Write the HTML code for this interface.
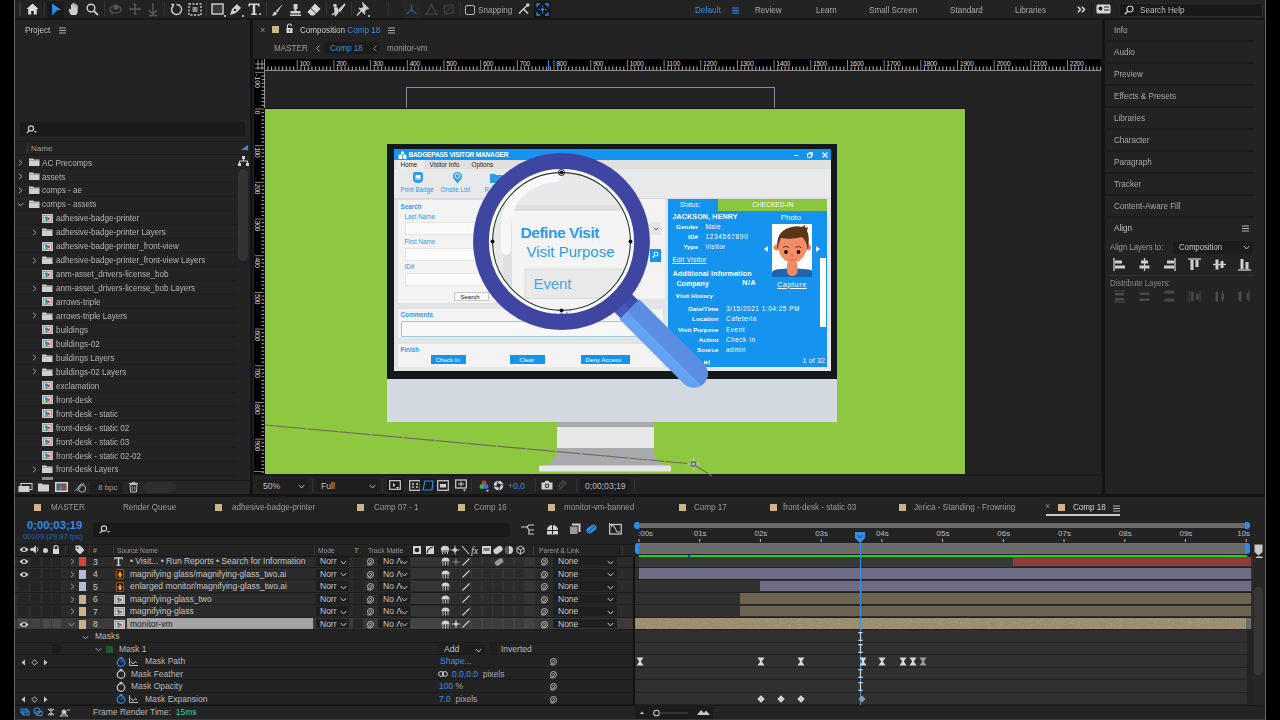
<!DOCTYPE html>
<html><head><meta charset="utf-8">
<style>
*{box-sizing:border-box;margin:0;padding:0}
html,body{width:1280px;height:720px;overflow:hidden;background:#000;font-family:"Liberation Sans",sans-serif;color:#a9a9a9;font-size:9px}
.a{position:absolute}
.t{position:absolute;white-space:nowrap;line-height:1}
.pan{position:absolute;background:#232323}
.ic{position:absolute;overflow:visible}
.sep{position:absolute;width:1px;background:#353535}
.n{transform:scaleX(.9);transform-origin:0 50%}
.n8{transform:scaleX(.86);transform-origin:0 50%}
</style></head>
<body>
<!-- frame -->
<div class="a" style="left:14px;top:0;width:1252px;height:720px;background:#141414;border-left:1px solid #686868;border-right:1px solid #686868"></div>
<!-- TOOLBAR -->
<div class="pan" style="left:15px;top:0;width:1250px;height:18px;background:#232323"></div>
<div class="a" style="left:15px;top:18px;width:1250px;height:2px;background:#171717"></div>
<div class="a" style="left:19px;top:2px;width:2px;height:14px;background:#3a3a3a"></div>
<svg class="ic" style="left:26px;top:3px" width="13" height="12" viewBox="0 0 13 12"><path d="M6.5 0.5 L12.5 6 L10.8 6 L10.8 11.5 L7.8 11.5 L7.8 8 L5.2 8 L5.2 11.5 L2.2 11.5 L2.2 6 L0.5 6 Z" fill="#dcdcdc"/></svg>
<div class="sep" style="left:44px;top:2px;height:14px"></div>
<div class="a" style="left:47px;top:1px;width:17px;height:17px;background:#1a1a1a;border-radius:2px"></div>
<svg class="ic" style="left:51px;top:3px" width="11" height="13" viewBox="0 0 11 13"><path d="M1 0.5 L10 6.8 L5.5 7.5 L1.2 12.5 Z" fill="#2b8cf2"/></svg>
<svg class="ic" style="left:68px;top:2px" width="12" height="14" viewBox="0 0 12 14"><path d="M3 13 C1 10 0.5 8 1 7 C1.5 6.5 2.5 7 3 8 L3 3 C3 2 4.3 2 4.3 3 L4.3 6 L4.5 1.5 C4.5 0.5 6 0.5 6 1.5 L6 6 L6.3 2 C6.3 1 7.8 1 7.8 2 L7.8 6.5 L8.3 3 C8.3 2.2 9.7 2.2 9.7 3 L9.7 9 C9.7 11 9 12 8 13 Z" fill="#d0d0d0"/></svg>
<svg class="ic" style="left:86px;top:3px" width="13" height="13" viewBox="0 0 13 13"><circle cx="5" cy="5" r="3.8" fill="none" stroke="#d0d0d0" stroke-width="1.4"/><path d="M7.8 7.8 L12 12" stroke="#d0d0d0" stroke-width="1.8"/></svg>
<div class="sep" style="left:104px;top:2px;height:14px"></div>
<svg class="ic" style="left:109px;top:3px" width="14" height="13" viewBox="0 0 14 13"><ellipse cx="6.5" cy="6.5" rx="5.5" ry="3.5" fill="none" stroke="#5a5a5a" stroke-width="1.2"/><circle cx="7" cy="4" r="2.6" fill="#5a5a5a"/><path d="M2 10 L4 10 L3 12Z" fill="#5a5a5a"/></svg>
<svg class="ic" style="left:129px;top:3px" width="13" height="13" viewBox="0 0 13 13"><path d="M6 1 V11 M1 6 H11" stroke="#5a5a5a" stroke-width="1.5"/><path d="M6 0 L4 2 H8Z M6 12 L4 10 H8Z M0 6 L2 4 V8Z M12 6 L10 4 V8Z" fill="#5a5a5a"/></svg>
<svg class="ic" style="left:148px;top:3px" width="11" height="13" viewBox="0 0 11 13"><path d="M5 0 V11 M1 7 L5 11 L9 7 M1 12.5 H9" stroke="#5a5a5a" stroke-width="1.4" fill="none"/></svg>
<div class="sep" style="left:164px;top:2px;height:14px"></div>
<svg class="ic" style="left:170px;top:3px" width="13" height="13" viewBox="0 0 13 13"><path d="M3 3 A5 5 0 1 0 6.5 1.5" fill="none" stroke="#d0d0d0" stroke-width="1.4"/><path d="M1 0.5 L4.5 1 L3 4.5 Z" fill="#d0d0d0"/></svg>
<svg class="ic" style="left:188px;top:3px" width="14" height="13" viewBox="0 0 14 13"><rect x="1" y="1" width="12" height="11" fill="none" stroke="#d0d0d0" stroke-width="1.4" stroke-dasharray="2 1.5"/><rect x="4.5" y="4" width="5" height="5" fill="#d0d0d0" opacity=".6"/></svg>
<div class="sep" style="left:206px;top:2px;height:14px"></div>
<svg class="ic" style="left:211px;top:3px" width="15" height="14" viewBox="0 0 15 14"><rect x="1" y="1" width="11" height="10" fill="#3a3a3a" stroke="#d0d0d0" stroke-width="1.4"/><path d="M13 12 h2 v2 h-2z" fill="#aaa"/></svg>
<svg class="ic" style="left:229px;top:3px" width="15" height="14" viewBox="0 0 15 14"><path d="M1 12 L3 6 L8 1 L12 5 L7 10 Z" fill="#d0d0d0"/><circle cx="6" cy="7" r="1.2" fill="#232323"/><path d="M13 12 h2 v2 h-2z" fill="#aaa"/></svg>
<svg class="ic" style="left:248px;top:3px" width="13" height="13" viewBox="0 0 13 13"><path d="M0.5 0.5 H11.5 V3.5 H10 V2 H7.2 V10.5 H8.8 V12 H3.2 V10.5 H4.8 V2 H2 V3.5 H0.5 Z" fill="#d6d6d6"/></svg>
<div class="a" style="left:259px;top:13px;width:2px;height:2px;background:#aaa"></div>
<div class="sep" style="left:266px;top:2px;height:14px"></div>
<svg class="ic" style="left:271px;top:3px" width="13" height="13" viewBox="0 0 13 13"><path d="M12 0.5 L5 8 L6.5 9.5 Z M4.5 8.5 C2 9 2.5 12 0.5 12.5 C3 13 6 12 6 10 Z" fill="#d0d0d0"/></svg>
<svg class="ic" style="left:289px;top:3px" width="13" height="13" viewBox="0 0 13 13"><path d="M4.5 1 h4 v5 h-1 v2 h4 v2.5 h-10 v-2.5 h4 v-2 h-1 Z M1 11.5 h11 v1.5 h-11z" fill="#d0d0d0"/></svg>
<svg class="ic" style="left:307px;top:3px" width="14" height="13" viewBox="0 0 14 13"><path d="M8 0.5 L13.5 6 L7 12.5 L4 12.5 L0.5 9 Z" fill="#d8d8d8"/><path d="M3.5 5 L9 10.5" stroke="#232323" stroke-width="1"/></svg>
<div class="sep" style="left:326px;top:2px;height:14px"></div>
<svg class="ic" style="left:331px;top:3px" width="15" height="14" viewBox="0 0 15 14"><circle cx="4" cy="2.5" r="1.8" fill="#d0d0d0"/><path d="M3 5 L6 5 L7 9 L4 13 M5 9 L1 12 M14 1 L8 7 L9 8 Z" stroke="#d0d0d0" stroke-width="1.5" fill="#d0d0d0"/></svg>
<div class="sep" style="left:351px;top:2px;height:14px"></div>
<svg class="ic" style="left:356px;top:3px" width="14" height="14" viewBox="0 0 14 14"><path d="M7 0.5 L12 5.5 L10 6 L8 9 L9 11 L3 5 L5 6 L8 4 Z M5 8 L1 12.5" stroke="#d0d0d0" stroke-width="1.3" fill="#d0d0d0"/><path d="M12 12 h2 v2 h-2z" fill="#aaa"/></svg>
<div class="sep" style="left:388px;top:2px;height:14px"></div>
<div class="a" style="left:403px;top:1px;width:17px;height:17px;background:#262626;border-radius:2px"></div>
<svg class="ic" style="left:405px;top:3px" width="13" height="13" viewBox="0 0 13 13"><path d="M6.5 1.5 V7 L1.5 11 M6.5 7 L11.5 11" stroke="#2e5a8c" stroke-width="1.4" fill="none"/><circle cx="6.5" cy="7" r="1.3" fill="#2e5a8c"/></svg>
<svg class="ic" style="left:425px;top:3px" width="13" height="13" viewBox="0 0 13 13"><path d="M6.5 2 L1.5 11 H11.5 Z" stroke="#444" stroke-width="1.2" fill="none"/><circle cx="6.5" cy="2" r="1.3" fill="#444"/><circle cx="1.5" cy="11" r="1.3" fill="#444"/><circle cx="11.5" cy="11" r="1.3" fill="#444"/></svg>
<svg class="ic" style="left:442px;top:3px" width="13" height="13" viewBox="0 0 13 13"><path d="M2 3 L11 2 L11 10 L3 11 Z" stroke="#444" stroke-width="1.2" fill="none"/><path d="M2 11 L11 2" stroke="#444" stroke-width="1"/></svg>
<div class="sep" style="left:460px;top:2px;height:14px"></div>
<div class="a" style="left:465px;top:5px;width:10px;height:10px;border:1.3px solid #b5b5b5;border-radius:2px"></div>
<div class="t n" style="left:478px;top:5.8px;font-size:9px;color:#a6a6a6">Snapping</div>
<svg class="ic" style="left:518px;top:3px" width="12" height="12" viewBox="0 0 12 12"><path d="M1 10.5 L5.5 6 L10 10.5" stroke="#d0d0d0" stroke-width="1.5" fill="none"/><path d="M5.5 6 L9.5 2" stroke="#d0d0d0" stroke-width="1.2"/><circle cx="9.8" cy="2" r="1.8" fill="#d0d0d0"/></svg>
<div class="a" style="left:534px;top:1px;width:17px;height:17px;background:#161616;border-radius:2px"></div>
<svg class="ic" style="left:536px;top:3px" width="13" height="13" viewBox="0 0 13 13"><path d="M1 4 V1 H4 M9 1 H12 V4 M12 9 V12 H9 M4 12 H1 V9" stroke="#2d8ceb" stroke-width="1.3" fill="none"/><circle cx="6.5" cy="6.5" r="1.5" fill="#2d8ceb"/><path d="M6.5 2.5 V4 M6.5 9 V10.5 M2.5 6.5 H4 M9 6.5 H10.5" stroke="#2d8ceb" stroke-width="1"/></svg>
<!-- workspaces -->
<div class="t n" style="left:695px;top:5.8px;color:#3a8fe5">Default</div>
<svg class="ic" style="left:732px;top:6.8px" width="7" height="7" viewBox="0 0 7 7"><path d="M0 1 H7 M0 3.5 H7 M0 6 H7" stroke="#3a8fe5" stroke-width="1"/></svg>
<div class="t n" style="left:755px;top:5.8px">Review</div>
<div class="t n" style="left:816px;top:5.8px">Learn</div>
<div class="t n" style="left:869px;top:5.8px">Small Screen</div>
<div class="t n" style="left:950px;top:5.8px">Standard</div>
<div class="t n" style="left:1015px;top:5.8px">Libraries</div>
<svg class="ic" style="left:1077px;top:6px" width="9" height="7" viewBox="0 0 9 7"><path d="M0.8 0.8 L3.5 3.5 L0.8 6.2 M4.8 0.8 L7.5 3.5 L4.8 6.2" stroke="#e0e0e0" stroke-width="1.4" fill="none"/></svg>
<div class="sep" style="left:1091px;top:2px;height:14px;background:#151515"></div>
<svg class="ic" style="left:1096px;top:4px" width="15" height="10" viewBox="0 0 15 10"><rect x="0.5" y="0.5" width="14" height="9" rx="1.5" fill="#d6d6d6"/><circle cx="4.5" cy="4.5" r="2" fill="#232323"/><path d="M8 3 H13 M8 6 H13" stroke="#232323" stroke-width="1.2"/></svg>
<div class="a" style="left:1119px;top:3px;width:144px;height:14px;background:#191919;border-radius:2px;border:1px solid #2a2a2a"></div>
<svg class="ic" style="left:1124px;top:5px" width="10" height="10" viewBox="0 0 10 10"><circle cx="6" cy="4" r="3" fill="none" stroke="#cfcfcf" stroke-width="1.2"/><path d="M4 6 L0.8 9.2" stroke="#cfcfcf" stroke-width="1.4"/></svg>
<div class="t n" style="left:1140px;top:6.3px;color:#bdbdbd">Search Help</div>
<!-- PROJECT -->
<div class="pan" style="left:15px;top:20px;width:235px;height:474px"></div>
<div class="t n" style="left:25px;top:25.5px;font-size:9px;color:#c4c4c4">Project</div>
<svg class="ic" style="left:59px;top:27px" width="7" height="7" viewBox="0 0 7 7"><path d="M0 1 H7 M0 3.5 H7 M0 6 H7" stroke="#b0b0b0" stroke-width="1"/></svg>
<div class="a" style="left:20px;top:122px;width:225px;height:14px;background:#1a1a1a;border-radius:2px"></div>
<svg class="ic" style="left:26px;top:125px" width="12" height="9" viewBox="0 0 12 9"><circle cx="5" cy="3.5" r="2.6" fill="none" stroke="#d0d0d0" stroke-width="1.1"/><path d="M3.2 5.5 L0.8 8.2" stroke="#d0d0d0" stroke-width="1.2"/><path d="M8 6 L11 6 L9.5 7.8Z" fill="#d0d0d0"/></svg>
<div class="a" style="left:15px;top:141px;width:235px;height:14px;background:#232323;border-top:1px solid #1b1b1b;border-bottom:1px solid #1b1b1b"></div>
<div class="a" style="left:27px;top:143px;width:1px;height:10px;background:#3a3a3a"></div>
<div class="t" style="left:31px;top:145px;font-size:8px;color:#9a9a9a">Name</div>
<svg class="ic" style="left:241px;top:145px" width="7" height="5" viewBox="0 0 7 5"><path d="M7 0 V5 H0 Z" fill="#2d8ceb"/></svg>
<div class="a" style="left:15px;top:155.50px;width:222px;height:13.95px;border-bottom:1px solid #1e1e1e"></div>
<svg class="ic" style="left:18px;top:158.97px" width="5" height="7" viewBox="0 0 5 7"><path d="M1 0.8 L4 3.5 L1 6.2" stroke="#9a9a9a" stroke-width="1" fill="none"/></svg>
<svg class="ic" style="left:29px;top:158.47px" width="11" height="8" viewBox="0 0 11 8"><path d="M0 0.5 H4 L5 1.5 H10.5 V8 H0 Z" fill="#cfcfcf"/><path d="M0 2.5 H10.5" stroke="#8a8a8a" stroke-width=".6"/></svg>
<div class="t" style="left:42px;top:158.57px;font-size:8.8px;color:#b4b4b4;transform:scaleX(.92);transform-origin:0 50%">AC Precomps</div>
<div class="a" style="left:15px;top:169.45px;width:222px;height:13.95px;border-bottom:1px solid #1e1e1e"></div>
<svg class="ic" style="left:18px;top:172.92px" width="5" height="7" viewBox="0 0 5 7"><path d="M1 0.8 L4 3.5 L1 6.2" stroke="#9a9a9a" stroke-width="1" fill="none"/></svg>
<svg class="ic" style="left:29px;top:172.42px" width="11" height="8" viewBox="0 0 11 8"><path d="M0 0.5 H4 L5 1.5 H10.5 V8 H0 Z" fill="#cfcfcf"/><path d="M0 2.5 H10.5" stroke="#8a8a8a" stroke-width=".6"/></svg>
<div class="t" style="left:42px;top:172.52px;font-size:8.8px;color:#b4b4b4;transform:scaleX(.92);transform-origin:0 50%">assets</div>
<div class="a" style="left:15px;top:183.40px;width:222px;height:13.95px;border-bottom:1px solid #1e1e1e"></div>
<svg class="ic" style="left:18px;top:186.88px" width="5" height="7" viewBox="0 0 5 7"><path d="M1 0.8 L4 3.5 L1 6.2" stroke="#9a9a9a" stroke-width="1" fill="none"/></svg>
<svg class="ic" style="left:29px;top:186.38px" width="11" height="8" viewBox="0 0 11 8"><path d="M0 0.5 H4 L5 1.5 H10.5 V8 H0 Z" fill="#cfcfcf"/><path d="M0 2.5 H10.5" stroke="#8a8a8a" stroke-width=".6"/></svg>
<div class="t" style="left:42px;top:186.47px;font-size:8.8px;color:#b4b4b4;transform:scaleX(.92);transform-origin:0 50%">comps - ae</div>
<div class="a" style="left:15px;top:197.35px;width:222px;height:13.95px;border-bottom:1px solid #1e1e1e"></div>
<svg class="ic" style="left:17px;top:202.32px" width="7" height="5" viewBox="0 0 7 5"><path d="M0.8 1 L3.5 4 L6.2 1" stroke="#9a9a9a" stroke-width="1" fill="none"/></svg>
<svg class="ic" style="left:29px;top:200.32px" width="11" height="8" viewBox="0 0 11 8"><path d="M0 0.5 H4 L5 1.5 H10.5 V8 H0 Z" fill="#cfcfcf"/><path d="M0 2.5 H10.5" stroke="#8a8a8a" stroke-width=".6"/></svg>
<div class="t" style="left:42px;top:200.42px;font-size:8.8px;color:#b4b4b4;transform:scaleX(.92);transform-origin:0 50%">comps - assets</div>
<div class="a" style="left:15px;top:211.30px;width:222px;height:13.95px;border-bottom:1px solid #1e1e1e"></div>
<svg class="ic" style="left:42px;top:213.78px" width="11" height="9" viewBox="0 0 11 9"><rect x="0" y="0" width="11" height="9" fill="#c9c9c9"/><rect x="1.5" y="1.5" width="8" height="6" fill="#dadada" stroke="#7a7a7a" stroke-width=".6"/><circle cx="4.3" cy="3.8" r="1.4" fill="#2a6fe0"/><circle cx="6.5" cy="4.8" r="1.4" fill="#e03030"/><circle cx="4.6" cy="6" r="1.2" fill="#30b040"/></svg>
<div class="t" style="left:56px;top:214.38px;font-size:8.8px;color:#b4b4b4;transform:scaleX(.92);transform-origin:0 50%">adhesive-badge-printer</div>
<div class="a" style="left:15px;top:225.25px;width:222px;height:13.95px;border-bottom:1px solid #1e1e1e"></div>
<svg class="ic" style="left:32px;top:228.72px" width="5" height="7" viewBox="0 0 5 7"><path d="M1 0.8 L4 3.5 L1 6.2" stroke="#9a9a9a" stroke-width="1" fill="none"/></svg>
<svg class="ic" style="left:42px;top:228.22px" width="11" height="8" viewBox="0 0 11 8"><path d="M0 0.5 H4 L5 1.5 H10.5 V8 H0 Z" fill="#cfcfcf"/><path d="M0 2.5 H10.5" stroke="#8a8a8a" stroke-width=".6"/></svg>
<div class="t" style="left:56px;top:228.32px;font-size:8.8px;color:#b4b4b4;transform:scaleX(.92);transform-origin:0 50%">adhesive-badge-printer Layers</div>
<div class="a" style="left:15px;top:239.20px;width:222px;height:13.95px;border-bottom:1px solid #1e1e1e"></div>
<svg class="ic" style="left:42px;top:241.67px" width="11" height="9" viewBox="0 0 11 9"><rect x="0" y="0" width="11" height="9" fill="#c9c9c9"/><rect x="1.5" y="1.5" width="8" height="6" fill="#dadada" stroke="#7a7a7a" stroke-width=".6"/><circle cx="4.3" cy="3.8" r="1.4" fill="#2a6fe0"/><circle cx="6.5" cy="4.8" r="1.4" fill="#e03030"/><circle cx="4.6" cy="6" r="1.2" fill="#30b040"/></svg>
<div class="t" style="left:56px;top:242.27px;font-size:8.8px;color:#b4b4b4;transform:scaleX(.92);transform-origin:0 50%">adhesive-badge-printer_front-view</div>
<div class="a" style="left:15px;top:253.15px;width:222px;height:13.95px;border-bottom:1px solid #1e1e1e"></div>
<svg class="ic" style="left:32px;top:256.62px" width="5" height="7" viewBox="0 0 5 7"><path d="M1 0.8 L4 3.5 L1 6.2" stroke="#9a9a9a" stroke-width="1" fill="none"/></svg>
<svg class="ic" style="left:42px;top:256.12px" width="11" height="8" viewBox="0 0 11 8"><path d="M0 0.5 H4 L5 1.5 H10.5 V8 H0 Z" fill="#cfcfcf"/><path d="M0 2.5 H10.5" stroke="#8a8a8a" stroke-width=".6"/></svg>
<div class="t" style="left:56px;top:256.23px;font-size:8.8px;color:#b4b4b4;transform:scaleX(.92);transform-origin:0 50%">adhesive-badge-printer_front-view Layers</div>
<div class="a" style="left:15px;top:267.10px;width:222px;height:13.95px;border-bottom:1px solid #1e1e1e"></div>
<svg class="ic" style="left:42px;top:269.58px" width="11" height="9" viewBox="0 0 11 9"><rect x="0" y="0" width="11" height="9" fill="#c9c9c9"/><rect x="1.5" y="1.5" width="8" height="6" fill="#dadada" stroke="#7a7a7a" stroke-width=".6"/><circle cx="4.3" cy="3.8" r="1.4" fill="#2a6fe0"/><circle cx="6.5" cy="4.8" r="1.4" fill="#e03030"/><circle cx="4.6" cy="6" r="1.2" fill="#30b040"/></svg>
<div class="t" style="left:56px;top:270.18px;font-size:8.8px;color:#b4b4b4;transform:scaleX(.92);transform-origin:0 50%">anm-asset_drivers-license_bob</div>
<div class="a" style="left:15px;top:281.05px;width:222px;height:13.95px;border-bottom:1px solid #1e1e1e"></div>
<svg class="ic" style="left:32px;top:284.53px" width="5" height="7" viewBox="0 0 5 7"><path d="M1 0.8 L4 3.5 L1 6.2" stroke="#9a9a9a" stroke-width="1" fill="none"/></svg>
<svg class="ic" style="left:42px;top:284.03px" width="11" height="8" viewBox="0 0 11 8"><path d="M0 0.5 H4 L5 1.5 H10.5 V8 H0 Z" fill="#cfcfcf"/><path d="M0 2.5 H10.5" stroke="#8a8a8a" stroke-width=".6"/></svg>
<div class="t" style="left:56px;top:284.13px;font-size:8.8px;color:#b4b4b4;transform:scaleX(.92);transform-origin:0 50%">anm-asset_drivers-license_bob Layers</div>
<div class="a" style="left:15px;top:295.00px;width:222px;height:13.95px;border-bottom:1px solid #1e1e1e"></div>
<svg class="ic" style="left:42px;top:297.48px" width="11" height="9" viewBox="0 0 11 9"><rect x="0" y="0" width="11" height="9" fill="#c9c9c9"/><rect x="1.5" y="1.5" width="8" height="6" fill="#dadada" stroke="#7a7a7a" stroke-width=".6"/><circle cx="4.3" cy="3.8" r="1.4" fill="#2a6fe0"/><circle cx="6.5" cy="4.8" r="1.4" fill="#e03030"/><circle cx="4.6" cy="6" r="1.2" fill="#30b040"/></svg>
<div class="t" style="left:56px;top:298.08px;font-size:8.8px;color:#b4b4b4;transform:scaleX(.92);transform-origin:0 50%">arrows-triple</div>
<div class="a" style="left:15px;top:308.95px;width:222px;height:13.95px;border-bottom:1px solid #1e1e1e"></div>
<svg class="ic" style="left:32px;top:312.43px" width="5" height="7" viewBox="0 0 5 7"><path d="M1 0.8 L4 3.5 L1 6.2" stroke="#9a9a9a" stroke-width="1" fill="none"/></svg>
<svg class="ic" style="left:42px;top:311.93px" width="11" height="8" viewBox="0 0 11 8"><path d="M0 0.5 H4 L5 1.5 H10.5 V8 H0 Z" fill="#cfcfcf"/><path d="M0 2.5 H10.5" stroke="#8a8a8a" stroke-width=".6"/></svg>
<div class="t" style="left:56px;top:312.03px;font-size:8.8px;color:#b4b4b4;transform:scaleX(.92);transform-origin:0 50%">arrows-triple Layers</div>
<div class="a" style="left:15px;top:322.90px;width:222px;height:13.95px;border-bottom:1px solid #1e1e1e"></div>
<svg class="ic" style="left:42px;top:325.38px" width="11" height="9" viewBox="0 0 11 9"><rect x="0" y="0" width="11" height="9" fill="#c9c9c9"/><rect x="1.5" y="1.5" width="8" height="6" fill="#dadada" stroke="#7a7a7a" stroke-width=".6"/><circle cx="4.3" cy="3.8" r="1.4" fill="#2a6fe0"/><circle cx="6.5" cy="4.8" r="1.4" fill="#e03030"/><circle cx="4.6" cy="6" r="1.2" fill="#30b040"/></svg>
<div class="t" style="left:56px;top:325.98px;font-size:8.8px;color:#b4b4b4;transform:scaleX(.92);transform-origin:0 50%">buildings</div>
<div class="a" style="left:15px;top:336.85px;width:222px;height:13.95px;border-bottom:1px solid #1e1e1e"></div>
<svg class="ic" style="left:42px;top:339.33px" width="11" height="9" viewBox="0 0 11 9"><rect x="0" y="0" width="11" height="9" fill="#c9c9c9"/><rect x="1.5" y="1.5" width="8" height="6" fill="#dadada" stroke="#7a7a7a" stroke-width=".6"/><circle cx="4.3" cy="3.8" r="1.4" fill="#2a6fe0"/><circle cx="6.5" cy="4.8" r="1.4" fill="#e03030"/><circle cx="4.6" cy="6" r="1.2" fill="#30b040"/></svg>
<div class="t" style="left:56px;top:339.93px;font-size:8.8px;color:#b4b4b4;transform:scaleX(.92);transform-origin:0 50%">buildings-02</div>
<div class="a" style="left:15px;top:350.80px;width:222px;height:13.95px;border-bottom:1px solid #1e1e1e"></div>
<svg class="ic" style="left:32px;top:354.27px" width="5" height="7" viewBox="0 0 5 7"><path d="M1 0.8 L4 3.5 L1 6.2" stroke="#9a9a9a" stroke-width="1" fill="none"/></svg>
<svg class="ic" style="left:42px;top:353.77px" width="11" height="8" viewBox="0 0 11 8"><path d="M0 0.5 H4 L5 1.5 H10.5 V8 H0 Z" fill="#cfcfcf"/><path d="M0 2.5 H10.5" stroke="#8a8a8a" stroke-width=".6"/></svg>
<div class="t" style="left:56px;top:353.88px;font-size:8.8px;color:#b4b4b4;transform:scaleX(.92);transform-origin:0 50%">buildings Layers</div>
<div class="a" style="left:15px;top:364.75px;width:222px;height:13.95px;border-bottom:1px solid #1e1e1e"></div>
<svg class="ic" style="left:32px;top:368.23px" width="5" height="7" viewBox="0 0 5 7"><path d="M1 0.8 L4 3.5 L1 6.2" stroke="#9a9a9a" stroke-width="1" fill="none"/></svg>
<svg class="ic" style="left:42px;top:367.73px" width="11" height="8" viewBox="0 0 11 8"><path d="M0 0.5 H4 L5 1.5 H10.5 V8 H0 Z" fill="#cfcfcf"/><path d="M0 2.5 H10.5" stroke="#8a8a8a" stroke-width=".6"/></svg>
<div class="t" style="left:56px;top:367.83px;font-size:8.8px;color:#b4b4b4;transform:scaleX(.92);transform-origin:0 50%">buildings-02 Layers</div>
<div class="a" style="left:15px;top:378.70px;width:222px;height:13.95px;border-bottom:1px solid #1e1e1e"></div>
<svg class="ic" style="left:42px;top:381.18px" width="11" height="9" viewBox="0 0 11 9"><rect x="0" y="0" width="11" height="9" fill="#c9c9c9"/><rect x="1.5" y="1.5" width="8" height="6" fill="#dadada" stroke="#7a7a7a" stroke-width=".6"/><circle cx="4.3" cy="3.8" r="1.4" fill="#2a6fe0"/><circle cx="6.5" cy="4.8" r="1.4" fill="#e03030"/><circle cx="4.6" cy="6" r="1.2" fill="#30b040"/></svg>
<div class="t" style="left:56px;top:381.78px;font-size:8.8px;color:#b4b4b4;transform:scaleX(.92);transform-origin:0 50%">exclamation</div>
<div class="a" style="left:15px;top:392.65px;width:222px;height:13.95px;border-bottom:1px solid #1e1e1e"></div>
<svg class="ic" style="left:42px;top:395.12px" width="11" height="9" viewBox="0 0 11 9"><rect x="0" y="0" width="11" height="9" fill="#c9c9c9"/><rect x="1.5" y="1.5" width="8" height="6" fill="#dadada" stroke="#7a7a7a" stroke-width=".6"/><circle cx="4.3" cy="3.8" r="1.4" fill="#2a6fe0"/><circle cx="6.5" cy="4.8" r="1.4" fill="#e03030"/><circle cx="4.6" cy="6" r="1.2" fill="#30b040"/></svg>
<div class="t" style="left:56px;top:395.73px;font-size:8.8px;color:#b4b4b4;transform:scaleX(.92);transform-origin:0 50%">front-desk</div>
<div class="a" style="left:15px;top:406.60px;width:222px;height:13.95px;border-bottom:1px solid #1e1e1e"></div>
<svg class="ic" style="left:42px;top:409.08px" width="11" height="9" viewBox="0 0 11 9"><rect x="0" y="0" width="11" height="9" fill="#c9c9c9"/><rect x="1.5" y="1.5" width="8" height="6" fill="#dadada" stroke="#7a7a7a" stroke-width=".6"/><circle cx="4.3" cy="3.8" r="1.4" fill="#2a6fe0"/><circle cx="6.5" cy="4.8" r="1.4" fill="#e03030"/><circle cx="4.6" cy="6" r="1.2" fill="#30b040"/></svg>
<div class="t" style="left:56px;top:409.68px;font-size:8.8px;color:#b4b4b4;transform:scaleX(.92);transform-origin:0 50%">front-desk - static</div>
<div class="a" style="left:15px;top:420.55px;width:222px;height:13.95px;border-bottom:1px solid #1e1e1e"></div>
<svg class="ic" style="left:42px;top:423.03px" width="11" height="9" viewBox="0 0 11 9"><rect x="0" y="0" width="11" height="9" fill="#c9c9c9"/><rect x="1.5" y="1.5" width="8" height="6" fill="#dadada" stroke="#7a7a7a" stroke-width=".6"/><circle cx="4.3" cy="3.8" r="1.4" fill="#2a6fe0"/><circle cx="6.5" cy="4.8" r="1.4" fill="#e03030"/><circle cx="4.6" cy="6" r="1.2" fill="#30b040"/></svg>
<div class="t" style="left:56px;top:423.63px;font-size:8.8px;color:#b4b4b4;transform:scaleX(.92);transform-origin:0 50%">front-desk - static 02</div>
<div class="a" style="left:15px;top:434.50px;width:222px;height:13.95px;border-bottom:1px solid #1e1e1e"></div>
<svg class="ic" style="left:42px;top:436.98px" width="11" height="9" viewBox="0 0 11 9"><rect x="0" y="0" width="11" height="9" fill="#c9c9c9"/><rect x="1.5" y="1.5" width="8" height="6" fill="#dadada" stroke="#7a7a7a" stroke-width=".6"/><circle cx="4.3" cy="3.8" r="1.4" fill="#2a6fe0"/><circle cx="6.5" cy="4.8" r="1.4" fill="#e03030"/><circle cx="4.6" cy="6" r="1.2" fill="#30b040"/></svg>
<div class="t" style="left:56px;top:437.58px;font-size:8.8px;color:#b4b4b4;transform:scaleX(.92);transform-origin:0 50%">front-desk - static 03</div>
<div class="a" style="left:15px;top:448.45px;width:222px;height:13.95px;border-bottom:1px solid #1e1e1e"></div>
<svg class="ic" style="left:42px;top:450.93px" width="11" height="9" viewBox="0 0 11 9"><rect x="0" y="0" width="11" height="9" fill="#c9c9c9"/><rect x="1.5" y="1.5" width="8" height="6" fill="#dadada" stroke="#7a7a7a" stroke-width=".6"/><circle cx="4.3" cy="3.8" r="1.4" fill="#2a6fe0"/><circle cx="6.5" cy="4.8" r="1.4" fill="#e03030"/><circle cx="4.6" cy="6" r="1.2" fill="#30b040"/></svg>
<div class="t" style="left:56px;top:451.53px;font-size:8.8px;color:#b4b4b4;transform:scaleX(.92);transform-origin:0 50%">front-desk - static 02-02</div>
<div class="a" style="left:15px;top:462.40px;width:222px;height:13.95px;border-bottom:1px solid #1e1e1e"></div>
<svg class="ic" style="left:32px;top:465.88px" width="5" height="7" viewBox="0 0 5 7"><path d="M1 0.8 L4 3.5 L1 6.2" stroke="#9a9a9a" stroke-width="1" fill="none"/></svg>
<svg class="ic" style="left:42px;top:465.38px" width="11" height="8" viewBox="0 0 11 8"><path d="M0 0.5 H4 L5 1.5 H10.5 V8 H0 Z" fill="#cfcfcf"/><path d="M0 2.5 H10.5" stroke="#8a8a8a" stroke-width=".6"/></svg>
<div class="t" style="left:56px;top:465.48px;font-size:8.8px;color:#b4b4b4;transform:scaleX(.92);transform-origin:0 50%">front-desk Layers</div>
<div class="a" style="left:42px;top:477px;width:11px;height:4px;background:#8a8a8a"></div>
<div class="a" style="left:238px;top:169px;width:10px;height:92px;background:#333;border-radius:5px"></div>
<svg class="ic" style="left:238px;top:156px" width="11" height="10" viewBox="0 0 11 10"><rect x="4" y="0" width="3" height="3" fill="#d0d0d0"/><rect x="0" y="7" width="3" height="3" fill="#d0d0d0"/><rect x="8" y="7" width="3" height="3" fill="#d0d0d0"/><path d="M5.5 3 V5 M1.5 7 V5 H9.5 V7" stroke="#d0d0d0" stroke-width="1" fill="none"/></svg>
<div class="a" style="left:15px;top:480px;width:235px;height:14px;background:#262626;border-top:1px solid #1b1b1b"></div>
<svg class="ic" style="left:18px;top:483px" width="15" height="9" viewBox="0 0 15 9"><rect x="3" y="0.5" width="11" height="6" fill="none" stroke="#cfcfcf" stroke-width="1"/><rect x="0.5" y="3" width="11" height="6" fill="#cfcfcf"/></svg>
<svg class="ic" style="left:38px;top:483px" width="12" height="9" viewBox="0 0 12 9"><path d="M0 0.5 H4 L5 1.5 H11 V8.5 H0 Z" fill="#cfcfcf"/></svg>
<svg class="ic" style="left:55px;top:482px" width="13" height="10" viewBox="0 0 13 10"><rect x="0" y="0" width="13" height="10" fill="#d0d0d0"/><rect x="1.5" y="1.5" width="10" height="7" fill="#5a5a5a"/><circle cx="5" cy="4" r="1.8" fill="#2a6fe0"/><circle cx="8" cy="5" r="1.8" fill="#e03030"/><circle cx="5.5" cy="6.5" r="1.5" fill="#30b040"/></svg>
<svg class="ic" style="left:74px;top:482px" width="13" height="11" viewBox="0 0 13 11"><circle cx="8" cy="6.5" r="3.5" fill="none" stroke="#9a9a9a" stroke-width="1.2"/><path d="M1 9 L8 1 M3 9 L10 1" stroke="#9a9a9a" stroke-width="1"/></svg>
<div class="a" style="left:90px;top:482px;width:33px;height:11px;background:#1e1e1e;border-radius:2px"></div>
<div class="t" style="left:98px;top:484px;font-size:8px;color:#9f9f9f">8 bpc</div>
<svg class="ic" style="left:129px;top:482px" width="9" height="10" viewBox="0 0 9 10"><path d="M0 1.5 H9 M3 1.5 V0.3 H6 V1.5 M1 2.5 H8 L7.4 10 H1.6 Z" stroke="#bdbdbd" stroke-width="1" fill="none"/><path d="M3.3 4 V8.5 M5.7 4 V8.5" stroke="#bdbdbd" stroke-width=".8"/></svg>
<div class="a" style="left:143px;top:482px;width:33px;height:11px;background:#2e2e2e;border-radius:6px"></div>
<!-- COMP PANEL -->
<div class="pan" style="left:253px;top:20px;width:849px;height:474px"></div>
<div class="t" style="left:260px;top:26px;font-size:9px;color:#8a8a8a">&#215;</div>
<div class="a" style="left:272px;top:26px;width:7px;height:7px;background:#c9b38a"></div>
<svg class="ic" style="left:286px;top:24px" width="7" height="9" viewBox="0 0 7 9"><path d="M1.5 4 V2 A2 2 0 0 1 5.5 2" stroke="#d8d8d8" stroke-width="1.1" fill="none"/><rect x="0.5" y="4" width="6" height="5" fill="#d8d8d8"/><rect x="3" y="5.5" width="1" height="2" fill="#232323"/></svg>
<div class="t n" style="left:300px;top:26px;font-size:9px;color:#c9c9c9">Composition <span style="color:#3a8fe5">Comp 18</span></div>
<svg class="ic" style="left:388px;top:27px" width="7" height="7" viewBox="0 0 7 7"><path d="M0 1 H7 M0 3.5 H7 M0 6 H7" stroke="#b0b0b0" stroke-width="1"/></svg>
<div class="t n" style="left:274px;top:44px;font-size:9px;color:#9c9c9c">MASTER</div>
<svg class="ic" style="left:316px;top:45px" width="4" height="7" viewBox="0 0 4 7"><path d="M3.5 0.5 L0.7 3.5 L3.5 6.5" stroke="#aaa" stroke-width="1" fill="none"/></svg>
<div class="a" style="left:324px;top:42px;width:55px;height:12px;background:#1b1b1b;border-radius:2px"></div>
<div class="t n" style="left:330px;top:44px;font-size:9px;color:#3a8fe5">Comp 18</div>
<svg class="ic" style="left:373px;top:45px" width="4" height="7" viewBox="0 0 4 7"><path d="M3.5 0.5 L0.7 3.5 L3.5 6.5" stroke="#3a8fe5" stroke-width="1" fill="none"/></svg>
<div class="t n" style="left:387px;top:44px;font-size:9px;color:#9c9c9c">monitor-vm</div>
<div class="a" style="left:254px;top:59px;width:848px;height:417px;background:#232323"></div>
<div class="a" style="left:254px;top:59px;width:847px;height:12px;background:#000;border-bottom:1px solid #8f8f8f"></div>
<div class="a" style="left:254px;top:59px;width:11px;height:417px;background:#000;border-right:1px solid #8f8f8f"></div>
<svg class="ic" style="left:254px;top:59px" width="847" height="12" viewBox="0 0 847 12"><path d="M13.94 7.5 V11" stroke="#a8a8a8" stroke-width="1.1"/><path d="M17.60 7.5 V11" stroke="#a8a8a8" stroke-width="1.1"/><path d="M21.27 7.5 V11" stroke="#a8a8a8" stroke-width="1.1"/><path d="M24.94 7.5 V11" stroke="#a8a8a8" stroke-width="1.1"/><path d="M28.61 7.5 V11" stroke="#a8a8a8" stroke-width="1.1"/><path d="M32.28 7.5 V11" stroke="#a8a8a8" stroke-width="1.1"/><path d="M35.94 7.5 V11" stroke="#a8a8a8" stroke-width="1.1"/><path d="M39.61 7.5 V11" stroke="#a8a8a8" stroke-width="1.1"/><path d="M43.28 1 V11" stroke="#8a8a8a" stroke-width="1"/><text x="45.48" y="6.6" font-family="Liberation Sans" font-size="7" fill="#d8d8d8" textLength="10.6">100</text><path d="M46.95 7.5 V11" stroke="#a8a8a8" stroke-width="1.1"/><path d="M50.62 7.5 V11" stroke="#a8a8a8" stroke-width="1.1"/><path d="M54.28 7.5 V11" stroke="#a8a8a8" stroke-width="1.1"/><path d="M57.95 7.5 V11" stroke="#a8a8a8" stroke-width="1.1"/><path d="M61.62 7.5 V11" stroke="#a8a8a8" stroke-width="1.1"/><path d="M65.29 7.5 V11" stroke="#a8a8a8" stroke-width="1.1"/><path d="M68.96 7.5 V11" stroke="#a8a8a8" stroke-width="1.1"/><path d="M72.62 7.5 V11" stroke="#a8a8a8" stroke-width="1.1"/><path d="M76.29 7.5 V11" stroke="#a8a8a8" stroke-width="1.1"/><path d="M79.96 1 V11" stroke="#8a8a8a" stroke-width="1"/><text x="82.16" y="6.6" font-family="Liberation Sans" font-size="7" fill="#d8d8d8" textLength="10.6">200</text><path d="M83.63 7.5 V11" stroke="#a8a8a8" stroke-width="1.1"/><path d="M87.30 7.5 V11" stroke="#a8a8a8" stroke-width="1.1"/><path d="M90.96 7.5 V11" stroke="#a8a8a8" stroke-width="1.1"/><path d="M94.63 7.5 V11" stroke="#a8a8a8" stroke-width="1.1"/><path d="M98.30 7.5 V11" stroke="#a8a8a8" stroke-width="1.1"/><path d="M101.97 7.5 V11" stroke="#a8a8a8" stroke-width="1.1"/><path d="M105.64 7.5 V11" stroke="#a8a8a8" stroke-width="1.1"/><path d="M109.30 7.5 V11" stroke="#a8a8a8" stroke-width="1.1"/><path d="M112.97 7.5 V11" stroke="#a8a8a8" stroke-width="1.1"/><path d="M116.64 1 V11" stroke="#8a8a8a" stroke-width="1"/><text x="118.84" y="6.6" font-family="Liberation Sans" font-size="7" fill="#d8d8d8" textLength="10.6">300</text><path d="M120.31 7.5 V11" stroke="#a8a8a8" stroke-width="1.1"/><path d="M123.98 7.5 V11" stroke="#a8a8a8" stroke-width="1.1"/><path d="M127.64 7.5 V11" stroke="#a8a8a8" stroke-width="1.1"/><path d="M131.31 7.5 V11" stroke="#a8a8a8" stroke-width="1.1"/><path d="M134.98 7.5 V11" stroke="#a8a8a8" stroke-width="1.1"/><path d="M138.65 7.5 V11" stroke="#a8a8a8" stroke-width="1.1"/><path d="M142.32 7.5 V11" stroke="#a8a8a8" stroke-width="1.1"/><path d="M145.98 7.5 V11" stroke="#a8a8a8" stroke-width="1.1"/><path d="M149.65 7.5 V11" stroke="#a8a8a8" stroke-width="1.1"/><path d="M153.32 1 V11" stroke="#8a8a8a" stroke-width="1"/><text x="155.52" y="6.6" font-family="Liberation Sans" font-size="7" fill="#d8d8d8" textLength="10.6">400</text><path d="M156.99 7.5 V11" stroke="#a8a8a8" stroke-width="1.1"/><path d="M160.66 7.5 V11" stroke="#a8a8a8" stroke-width="1.1"/><path d="M164.32 7.5 V11" stroke="#a8a8a8" stroke-width="1.1"/><path d="M167.99 7.5 V11" stroke="#a8a8a8" stroke-width="1.1"/><path d="M171.66 7.5 V11" stroke="#a8a8a8" stroke-width="1.1"/><path d="M175.33 7.5 V11" stroke="#a8a8a8" stroke-width="1.1"/><path d="M179.00 7.5 V11" stroke="#a8a8a8" stroke-width="1.1"/><path d="M182.66 7.5 V11" stroke="#a8a8a8" stroke-width="1.1"/><path d="M186.33 7.5 V11" stroke="#a8a8a8" stroke-width="1.1"/><path d="M190.00 1 V11" stroke="#8a8a8a" stroke-width="1"/><text x="192.20" y="6.6" font-family="Liberation Sans" font-size="7" fill="#d8d8d8" textLength="10.6">500</text><path d="M193.67 7.5 V11" stroke="#a8a8a8" stroke-width="1.1"/><path d="M197.34 7.5 V11" stroke="#a8a8a8" stroke-width="1.1"/><path d="M201.00 7.5 V11" stroke="#a8a8a8" stroke-width="1.1"/><path d="M204.67 7.5 V11" stroke="#a8a8a8" stroke-width="1.1"/><path d="M208.34 7.5 V11" stroke="#a8a8a8" stroke-width="1.1"/><path d="M212.01 7.5 V11" stroke="#a8a8a8" stroke-width="1.1"/><path d="M215.68 7.5 V11" stroke="#a8a8a8" stroke-width="1.1"/><path d="M219.34 7.5 V11" stroke="#a8a8a8" stroke-width="1.1"/><path d="M223.01 7.5 V11" stroke="#a8a8a8" stroke-width="1.1"/><path d="M226.68 1 V11" stroke="#8a8a8a" stroke-width="1"/><text x="228.88" y="6.6" font-family="Liberation Sans" font-size="7" fill="#d8d8d8" textLength="10.6">600</text><path d="M230.35 7.5 V11" stroke="#a8a8a8" stroke-width="1.1"/><path d="M234.02 7.5 V11" stroke="#a8a8a8" stroke-width="1.1"/><path d="M237.68 7.5 V11" stroke="#a8a8a8" stroke-width="1.1"/><path d="M241.35 7.5 V11" stroke="#a8a8a8" stroke-width="1.1"/><path d="M245.02 7.5 V11" stroke="#a8a8a8" stroke-width="1.1"/><path d="M248.69 7.5 V11" stroke="#a8a8a8" stroke-width="1.1"/><path d="M252.36 7.5 V11" stroke="#a8a8a8" stroke-width="1.1"/><path d="M256.02 7.5 V11" stroke="#a8a8a8" stroke-width="1.1"/><path d="M259.69 7.5 V11" stroke="#a8a8a8" stroke-width="1.1"/><path d="M263.36 1 V11" stroke="#8a8a8a" stroke-width="1"/><text x="265.56" y="6.6" font-family="Liberation Sans" font-size="7" fill="#d8d8d8" textLength="10.6">700</text><path d="M267.03 7.5 V11" stroke="#a8a8a8" stroke-width="1.1"/><path d="M270.70 7.5 V11" stroke="#a8a8a8" stroke-width="1.1"/><path d="M274.36 7.5 V11" stroke="#a8a8a8" stroke-width="1.1"/><path d="M278.03 7.5 V11" stroke="#a8a8a8" stroke-width="1.1"/><path d="M281.70 7.5 V11" stroke="#a8a8a8" stroke-width="1.1"/><path d="M285.37 7.5 V11" stroke="#a8a8a8" stroke-width="1.1"/><path d="M289.04 7.5 V11" stroke="#a8a8a8" stroke-width="1.1"/><path d="M292.70 7.5 V11" stroke="#a8a8a8" stroke-width="1.1"/><path d="M296.37 7.5 V11" stroke="#a8a8a8" stroke-width="1.1"/><path d="M300.04 1 V11" stroke="#8a8a8a" stroke-width="1"/><text x="302.24" y="6.6" font-family="Liberation Sans" font-size="7" fill="#d8d8d8" textLength="10.6">800</text><path d="M303.71 7.5 V11" stroke="#a8a8a8" stroke-width="1.1"/><path d="M307.38 7.5 V11" stroke="#a8a8a8" stroke-width="1.1"/><path d="M311.04 7.5 V11" stroke="#a8a8a8" stroke-width="1.1"/><path d="M314.71 7.5 V11" stroke="#a8a8a8" stroke-width="1.1"/><path d="M318.38 7.5 V11" stroke="#a8a8a8" stroke-width="1.1"/><path d="M322.05 7.5 V11" stroke="#a8a8a8" stroke-width="1.1"/><path d="M325.72 7.5 V11" stroke="#a8a8a8" stroke-width="1.1"/><path d="M329.38 7.5 V11" stroke="#a8a8a8" stroke-width="1.1"/><path d="M333.05 7.5 V11" stroke="#a8a8a8" stroke-width="1.1"/><path d="M336.72 1 V11" stroke="#8a8a8a" stroke-width="1"/><text x="338.92" y="6.6" font-family="Liberation Sans" font-size="7" fill="#d8d8d8" textLength="10.6">900</text><path d="M340.39 7.5 V11" stroke="#a8a8a8" stroke-width="1.1"/><path d="M344.06 7.5 V11" stroke="#a8a8a8" stroke-width="1.1"/><path d="M347.72 7.5 V11" stroke="#a8a8a8" stroke-width="1.1"/><path d="M351.39 7.5 V11" stroke="#a8a8a8" stroke-width="1.1"/><path d="M355.06 7.5 V11" stroke="#a8a8a8" stroke-width="1.1"/><path d="M358.73 7.5 V11" stroke="#a8a8a8" stroke-width="1.1"/><path d="M362.40 7.5 V11" stroke="#a8a8a8" stroke-width="1.1"/><path d="M366.06 7.5 V11" stroke="#a8a8a8" stroke-width="1.1"/><path d="M369.73 7.5 V11" stroke="#a8a8a8" stroke-width="1.1"/><path d="M373.40 1 V11" stroke="#8a8a8a" stroke-width="1"/><text x="375.60" y="6.6" font-family="Liberation Sans" font-size="7" fill="#d8d8d8" textLength="14.2">1000</text><path d="M377.07 7.5 V11" stroke="#a8a8a8" stroke-width="1.1"/><path d="M380.74 7.5 V11" stroke="#a8a8a8" stroke-width="1.1"/><path d="M384.40 7.5 V11" stroke="#a8a8a8" stroke-width="1.1"/><path d="M388.07 7.5 V11" stroke="#a8a8a8" stroke-width="1.1"/><path d="M391.74 7.5 V11" stroke="#a8a8a8" stroke-width="1.1"/><path d="M395.41 7.5 V11" stroke="#a8a8a8" stroke-width="1.1"/><path d="M399.08 7.5 V11" stroke="#a8a8a8" stroke-width="1.1"/><path d="M402.74 7.5 V11" stroke="#a8a8a8" stroke-width="1.1"/><path d="M406.41 7.5 V11" stroke="#a8a8a8" stroke-width="1.1"/><path d="M410.08 1 V11" stroke="#8a8a8a" stroke-width="1"/><text x="412.28" y="6.6" font-family="Liberation Sans" font-size="7" fill="#d8d8d8" textLength="14.2">1100</text><path d="M413.75 7.5 V11" stroke="#a8a8a8" stroke-width="1.1"/><path d="M417.42 7.5 V11" stroke="#a8a8a8" stroke-width="1.1"/><path d="M421.08 7.5 V11" stroke="#a8a8a8" stroke-width="1.1"/><path d="M424.75 7.5 V11" stroke="#a8a8a8" stroke-width="1.1"/><path d="M428.42 7.5 V11" stroke="#a8a8a8" stroke-width="1.1"/><path d="M432.09 7.5 V11" stroke="#a8a8a8" stroke-width="1.1"/><path d="M435.76 7.5 V11" stroke="#a8a8a8" stroke-width="1.1"/><path d="M439.42 7.5 V11" stroke="#a8a8a8" stroke-width="1.1"/><path d="M443.09 7.5 V11" stroke="#a8a8a8" stroke-width="1.1"/><path d="M446.76 1 V11" stroke="#8a8a8a" stroke-width="1"/><text x="448.96" y="6.6" font-family="Liberation Sans" font-size="7" fill="#d8d8d8" textLength="14.2">1200</text><path d="M450.43 7.5 V11" stroke="#a8a8a8" stroke-width="1.1"/><path d="M454.10 7.5 V11" stroke="#a8a8a8" stroke-width="1.1"/><path d="M457.76 7.5 V11" stroke="#a8a8a8" stroke-width="1.1"/><path d="M461.43 7.5 V11" stroke="#a8a8a8" stroke-width="1.1"/><path d="M465.10 7.5 V11" stroke="#a8a8a8" stroke-width="1.1"/><path d="M468.77 7.5 V11" stroke="#a8a8a8" stroke-width="1.1"/><path d="M472.44 7.5 V11" stroke="#a8a8a8" stroke-width="1.1"/><path d="M476.10 7.5 V11" stroke="#a8a8a8" stroke-width="1.1"/><path d="M479.77 7.5 V11" stroke="#a8a8a8" stroke-width="1.1"/><path d="M483.44 1 V11" stroke="#8a8a8a" stroke-width="1"/><text x="485.64" y="6.6" font-family="Liberation Sans" font-size="7" fill="#d8d8d8" textLength="14.2">1300</text><path d="M487.11 7.5 V11" stroke="#a8a8a8" stroke-width="1.1"/><path d="M490.78 7.5 V11" stroke="#a8a8a8" stroke-width="1.1"/><path d="M494.44 7.5 V11" stroke="#a8a8a8" stroke-width="1.1"/><path d="M498.11 7.5 V11" stroke="#a8a8a8" stroke-width="1.1"/><path d="M501.78 7.5 V11" stroke="#a8a8a8" stroke-width="1.1"/><path d="M505.45 7.5 V11" stroke="#a8a8a8" stroke-width="1.1"/><path d="M509.12 7.5 V11" stroke="#a8a8a8" stroke-width="1.1"/><path d="M512.78 7.5 V11" stroke="#a8a8a8" stroke-width="1.1"/><path d="M516.45 7.5 V11" stroke="#a8a8a8" stroke-width="1.1"/><path d="M520.12 1 V11" stroke="#8a8a8a" stroke-width="1"/><text x="522.32" y="6.6" font-family="Liberation Sans" font-size="7" fill="#d8d8d8" textLength="14.2">1400</text><path d="M523.79 7.5 V11" stroke="#a8a8a8" stroke-width="1.1"/><path d="M527.46 7.5 V11" stroke="#a8a8a8" stroke-width="1.1"/><path d="M531.12 7.5 V11" stroke="#a8a8a8" stroke-width="1.1"/><path d="M534.79 7.5 V11" stroke="#a8a8a8" stroke-width="1.1"/><path d="M538.46 7.5 V11" stroke="#a8a8a8" stroke-width="1.1"/><path d="M542.13 7.5 V11" stroke="#a8a8a8" stroke-width="1.1"/><path d="M545.80 7.5 V11" stroke="#a8a8a8" stroke-width="1.1"/><path d="M549.46 7.5 V11" stroke="#a8a8a8" stroke-width="1.1"/><path d="M553.13 7.5 V11" stroke="#a8a8a8" stroke-width="1.1"/><path d="M556.80 1 V11" stroke="#8a8a8a" stroke-width="1"/><text x="559.00" y="6.6" font-family="Liberation Sans" font-size="7" fill="#d8d8d8" textLength="14.2">1500</text><path d="M560.47 7.5 V11" stroke="#a8a8a8" stroke-width="1.1"/><path d="M564.14 7.5 V11" stroke="#a8a8a8" stroke-width="1.1"/><path d="M567.80 7.5 V11" stroke="#a8a8a8" stroke-width="1.1"/><path d="M571.47 7.5 V11" stroke="#a8a8a8" stroke-width="1.1"/><path d="M575.14 7.5 V11" stroke="#a8a8a8" stroke-width="1.1"/><path d="M578.81 7.5 V11" stroke="#a8a8a8" stroke-width="1.1"/><path d="M582.48 7.5 V11" stroke="#a8a8a8" stroke-width="1.1"/><path d="M586.14 7.5 V11" stroke="#a8a8a8" stroke-width="1.1"/><path d="M589.81 7.5 V11" stroke="#a8a8a8" stroke-width="1.1"/><path d="M593.48 1 V11" stroke="#8a8a8a" stroke-width="1"/><text x="595.68" y="6.6" font-family="Liberation Sans" font-size="7" fill="#d8d8d8" textLength="14.2">1600</text><path d="M597.15 7.5 V11" stroke="#a8a8a8" stroke-width="1.1"/><path d="M600.82 7.5 V11" stroke="#a8a8a8" stroke-width="1.1"/><path d="M604.48 7.5 V11" stroke="#a8a8a8" stroke-width="1.1"/><path d="M608.15 7.5 V11" stroke="#a8a8a8" stroke-width="1.1"/><path d="M611.82 7.5 V11" stroke="#a8a8a8" stroke-width="1.1"/><path d="M615.49 7.5 V11" stroke="#a8a8a8" stroke-width="1.1"/><path d="M619.16 7.5 V11" stroke="#a8a8a8" stroke-width="1.1"/><path d="M622.82 7.5 V11" stroke="#a8a8a8" stroke-width="1.1"/><path d="M626.49 7.5 V11" stroke="#a8a8a8" stroke-width="1.1"/><path d="M630.16 1 V11" stroke="#8a8a8a" stroke-width="1"/><text x="632.36" y="6.6" font-family="Liberation Sans" font-size="7" fill="#d8d8d8" textLength="14.2">1700</text><path d="M633.83 7.5 V11" stroke="#a8a8a8" stroke-width="1.1"/><path d="M637.50 7.5 V11" stroke="#a8a8a8" stroke-width="1.1"/><path d="M641.16 7.5 V11" stroke="#a8a8a8" stroke-width="1.1"/><path d="M644.83 7.5 V11" stroke="#a8a8a8" stroke-width="1.1"/><path d="M648.50 7.5 V11" stroke="#a8a8a8" stroke-width="1.1"/><path d="M652.17 7.5 V11" stroke="#a8a8a8" stroke-width="1.1"/><path d="M655.84 7.5 V11" stroke="#a8a8a8" stroke-width="1.1"/><path d="M659.50 7.5 V11" stroke="#a8a8a8" stroke-width="1.1"/><path d="M663.17 7.5 V11" stroke="#a8a8a8" stroke-width="1.1"/><path d="M666.84 1 V11" stroke="#8a8a8a" stroke-width="1"/><text x="669.04" y="6.6" font-family="Liberation Sans" font-size="7" fill="#d8d8d8" textLength="14.2">1800</text><path d="M670.51 7.5 V11" stroke="#a8a8a8" stroke-width="1.1"/><path d="M674.18 7.5 V11" stroke="#a8a8a8" stroke-width="1.1"/><path d="M677.84 7.5 V11" stroke="#a8a8a8" stroke-width="1.1"/><path d="M681.51 7.5 V11" stroke="#a8a8a8" stroke-width="1.1"/><path d="M685.18 7.5 V11" stroke="#a8a8a8" stroke-width="1.1"/><path d="M688.85 7.5 V11" stroke="#a8a8a8" stroke-width="1.1"/><path d="M692.52 7.5 V11" stroke="#a8a8a8" stroke-width="1.1"/><path d="M696.18 7.5 V11" stroke="#a8a8a8" stroke-width="1.1"/><path d="M699.85 7.5 V11" stroke="#a8a8a8" stroke-width="1.1"/><path d="M703.52 1 V11" stroke="#8a8a8a" stroke-width="1"/><text x="705.72" y="6.6" font-family="Liberation Sans" font-size="7" fill="#d8d8d8" textLength="14.2">1900</text><path d="M707.19 7.5 V11" stroke="#a8a8a8" stroke-width="1.1"/><path d="M710.86 7.5 V11" stroke="#a8a8a8" stroke-width="1.1"/><path d="M714.52 7.5 V11" stroke="#a8a8a8" stroke-width="1.1"/><path d="M718.19 7.5 V11" stroke="#a8a8a8" stroke-width="1.1"/><path d="M721.86 7.5 V11" stroke="#a8a8a8" stroke-width="1.1"/><path d="M725.53 7.5 V11" stroke="#a8a8a8" stroke-width="1.1"/><path d="M729.20 7.5 V11" stroke="#a8a8a8" stroke-width="1.1"/><path d="M732.86 7.5 V11" stroke="#a8a8a8" stroke-width="1.1"/><path d="M736.53 7.5 V11" stroke="#a8a8a8" stroke-width="1.1"/><path d="M740.20 1 V11" stroke="#8a8a8a" stroke-width="1"/><text x="742.40" y="6.6" font-family="Liberation Sans" font-size="7" fill="#d8d8d8" textLength="14.2">2000</text><path d="M743.87 7.5 V11" stroke="#a8a8a8" stroke-width="1.1"/><path d="M747.54 7.5 V11" stroke="#a8a8a8" stroke-width="1.1"/><path d="M751.20 7.5 V11" stroke="#a8a8a8" stroke-width="1.1"/><path d="M754.87 7.5 V11" stroke="#a8a8a8" stroke-width="1.1"/><path d="M758.54 7.5 V11" stroke="#a8a8a8" stroke-width="1.1"/><path d="M762.21 7.5 V11" stroke="#a8a8a8" stroke-width="1.1"/><path d="M765.88 7.5 V11" stroke="#a8a8a8" stroke-width="1.1"/><path d="M769.54 7.5 V11" stroke="#a8a8a8" stroke-width="1.1"/><path d="M773.21 7.5 V11" stroke="#a8a8a8" stroke-width="1.1"/><path d="M776.88 1 V11" stroke="#8a8a8a" stroke-width="1"/><text x="779.08" y="6.6" font-family="Liberation Sans" font-size="7" fill="#d8d8d8" textLength="14.2">2100</text><path d="M780.55 7.5 V11" stroke="#a8a8a8" stroke-width="1.1"/><path d="M784.22 7.5 V11" stroke="#a8a8a8" stroke-width="1.1"/><path d="M787.88 7.5 V11" stroke="#a8a8a8" stroke-width="1.1"/><path d="M791.55 7.5 V11" stroke="#a8a8a8" stroke-width="1.1"/><path d="M795.22 7.5 V11" stroke="#a8a8a8" stroke-width="1.1"/><path d="M798.89 7.5 V11" stroke="#a8a8a8" stroke-width="1.1"/><path d="M802.56 7.5 V11" stroke="#a8a8a8" stroke-width="1.1"/><path d="M806.22 7.5 V11" stroke="#a8a8a8" stroke-width="1.1"/><path d="M809.89 7.5 V11" stroke="#a8a8a8" stroke-width="1.1"/><path d="M813.56 1 V11" stroke="#8a8a8a" stroke-width="1"/><text x="815.76" y="6.6" font-family="Liberation Sans" font-size="7" fill="#d8d8d8" textLength="14.2">2200</text><path d="M817.23 7.5 V11" stroke="#a8a8a8" stroke-width="1.1"/><path d="M820.90 7.5 V11" stroke="#a8a8a8" stroke-width="1.1"/><path d="M824.56 7.5 V11" stroke="#a8a8a8" stroke-width="1.1"/><path d="M828.23 7.5 V11" stroke="#a8a8a8" stroke-width="1.1"/><path d="M831.90 7.5 V11" stroke="#a8a8a8" stroke-width="1.1"/><path d="M835.57 7.5 V11" stroke="#a8a8a8" stroke-width="1.1"/><path d="M839.24 7.5 V11" stroke="#a8a8a8" stroke-width="1.1"/><path d="M842.90 7.5 V11" stroke="#a8a8a8" stroke-width="1.1"/><path d="M846.57 7.5 V11" stroke="#a8a8a8" stroke-width="1.1"/></svg>
<svg class="ic" style="left:254px;top:71px" width="11" height="405" viewBox="0 0 11 405"><path d="M1 1.32 H11" stroke="#8a8a8a" stroke-width="1"/><text x="0" y="0" transform="translate(1.3 2.82) rotate(90)" font-family="Liberation Sans" font-size="7" fill="#d8d8d8" textLength="14.2">-100</text><path d="M7.5 4.99 H11" stroke="#a8a8a8" stroke-width="1.1"/><path d="M7.5 8.66 H11" stroke="#a8a8a8" stroke-width="1.1"/><path d="M7.5 12.32 H11" stroke="#a8a8a8" stroke-width="1.1"/><path d="M7.5 15.99 H11" stroke="#a8a8a8" stroke-width="1.1"/><path d="M7.5 19.66 H11" stroke="#a8a8a8" stroke-width="1.1"/><path d="M7.5 23.33 H11" stroke="#a8a8a8" stroke-width="1.1"/><path d="M7.5 27.00 H11" stroke="#a8a8a8" stroke-width="1.1"/><path d="M7.5 30.66 H11" stroke="#a8a8a8" stroke-width="1.1"/><path d="M7.5 34.33 H11" stroke="#a8a8a8" stroke-width="1.1"/><path d="M1 38.00 H11" stroke="#8a8a8a" stroke-width="1"/><text x="0" y="0" transform="translate(1.3 39.50) rotate(90)" font-family="Liberation Sans" font-size="7" fill="#d8d8d8" textLength="3.5">0</text><path d="M7.5 41.67 H11" stroke="#a8a8a8" stroke-width="1.1"/><path d="M7.5 45.34 H11" stroke="#a8a8a8" stroke-width="1.1"/><path d="M7.5 49.00 H11" stroke="#a8a8a8" stroke-width="1.1"/><path d="M7.5 52.67 H11" stroke="#a8a8a8" stroke-width="1.1"/><path d="M7.5 56.34 H11" stroke="#a8a8a8" stroke-width="1.1"/><path d="M7.5 60.01 H11" stroke="#a8a8a8" stroke-width="1.1"/><path d="M7.5 63.68 H11" stroke="#a8a8a8" stroke-width="1.1"/><path d="M7.5 67.34 H11" stroke="#a8a8a8" stroke-width="1.1"/><path d="M7.5 71.01 H11" stroke="#a8a8a8" stroke-width="1.1"/><path d="M1 74.68 H11" stroke="#8a8a8a" stroke-width="1"/><text x="0" y="0" transform="translate(1.3 76.18) rotate(90)" font-family="Liberation Sans" font-size="7" fill="#d8d8d8" textLength="10.6">100</text><path d="M7.5 78.35 H11" stroke="#a8a8a8" stroke-width="1.1"/><path d="M7.5 82.02 H11" stroke="#a8a8a8" stroke-width="1.1"/><path d="M7.5 85.68 H11" stroke="#a8a8a8" stroke-width="1.1"/><path d="M7.5 89.35 H11" stroke="#a8a8a8" stroke-width="1.1"/><path d="M7.5 93.02 H11" stroke="#a8a8a8" stroke-width="1.1"/><path d="M7.5 96.69 H11" stroke="#a8a8a8" stroke-width="1.1"/><path d="M7.5 100.36 H11" stroke="#a8a8a8" stroke-width="1.1"/><path d="M7.5 104.02 H11" stroke="#a8a8a8" stroke-width="1.1"/><path d="M7.5 107.69 H11" stroke="#a8a8a8" stroke-width="1.1"/><path d="M1 111.36 H11" stroke="#8a8a8a" stroke-width="1"/><text x="0" y="0" transform="translate(1.3 112.86) rotate(90)" font-family="Liberation Sans" font-size="7" fill="#d8d8d8" textLength="10.6">200</text><path d="M7.5 115.03 H11" stroke="#a8a8a8" stroke-width="1.1"/><path d="M7.5 118.70 H11" stroke="#a8a8a8" stroke-width="1.1"/><path d="M7.5 122.36 H11" stroke="#a8a8a8" stroke-width="1.1"/><path d="M7.5 126.03 H11" stroke="#a8a8a8" stroke-width="1.1"/><path d="M7.5 129.70 H11" stroke="#a8a8a8" stroke-width="1.1"/><path d="M7.5 133.37 H11" stroke="#a8a8a8" stroke-width="1.1"/><path d="M7.5 137.04 H11" stroke="#a8a8a8" stroke-width="1.1"/><path d="M7.5 140.70 H11" stroke="#a8a8a8" stroke-width="1.1"/><path d="M7.5 144.37 H11" stroke="#a8a8a8" stroke-width="1.1"/><path d="M1 148.04 H11" stroke="#8a8a8a" stroke-width="1"/><text x="0" y="0" transform="translate(1.3 149.54) rotate(90)" font-family="Liberation Sans" font-size="7" fill="#d8d8d8" textLength="10.6">300</text><path d="M7.5 151.71 H11" stroke="#a8a8a8" stroke-width="1.1"/><path d="M7.5 155.38 H11" stroke="#a8a8a8" stroke-width="1.1"/><path d="M7.5 159.04 H11" stroke="#a8a8a8" stroke-width="1.1"/><path d="M7.5 162.71 H11" stroke="#a8a8a8" stroke-width="1.1"/><path d="M7.5 166.38 H11" stroke="#a8a8a8" stroke-width="1.1"/><path d="M7.5 170.05 H11" stroke="#a8a8a8" stroke-width="1.1"/><path d="M7.5 173.72 H11" stroke="#a8a8a8" stroke-width="1.1"/><path d="M7.5 177.38 H11" stroke="#a8a8a8" stroke-width="1.1"/><path d="M7.5 181.05 H11" stroke="#a8a8a8" stroke-width="1.1"/><path d="M1 184.72 H11" stroke="#8a8a8a" stroke-width="1"/><text x="0" y="0" transform="translate(1.3 186.22) rotate(90)" font-family="Liberation Sans" font-size="7" fill="#d8d8d8" textLength="10.6">400</text><path d="M7.5 188.39 H11" stroke="#a8a8a8" stroke-width="1.1"/><path d="M7.5 192.06 H11" stroke="#a8a8a8" stroke-width="1.1"/><path d="M7.5 195.72 H11" stroke="#a8a8a8" stroke-width="1.1"/><path d="M7.5 199.39 H11" stroke="#a8a8a8" stroke-width="1.1"/><path d="M7.5 203.06 H11" stroke="#a8a8a8" stroke-width="1.1"/><path d="M7.5 206.73 H11" stroke="#a8a8a8" stroke-width="1.1"/><path d="M7.5 210.40 H11" stroke="#a8a8a8" stroke-width="1.1"/><path d="M7.5 214.06 H11" stroke="#a8a8a8" stroke-width="1.1"/><path d="M7.5 217.73 H11" stroke="#a8a8a8" stroke-width="1.1"/><path d="M1 221.40 H11" stroke="#8a8a8a" stroke-width="1"/><text x="0" y="0" transform="translate(1.3 222.90) rotate(90)" font-family="Liberation Sans" font-size="7" fill="#d8d8d8" textLength="10.6">500</text><path d="M7.5 225.07 H11" stroke="#a8a8a8" stroke-width="1.1"/><path d="M7.5 228.74 H11" stroke="#a8a8a8" stroke-width="1.1"/><path d="M7.5 232.40 H11" stroke="#a8a8a8" stroke-width="1.1"/><path d="M7.5 236.07 H11" stroke="#a8a8a8" stroke-width="1.1"/><path d="M7.5 239.74 H11" stroke="#a8a8a8" stroke-width="1.1"/><path d="M7.5 243.41 H11" stroke="#a8a8a8" stroke-width="1.1"/><path d="M7.5 247.08 H11" stroke="#a8a8a8" stroke-width="1.1"/><path d="M7.5 250.74 H11" stroke="#a8a8a8" stroke-width="1.1"/><path d="M7.5 254.41 H11" stroke="#a8a8a8" stroke-width="1.1"/><path d="M1 258.08 H11" stroke="#8a8a8a" stroke-width="1"/><text x="0" y="0" transform="translate(1.3 259.58) rotate(90)" font-family="Liberation Sans" font-size="7" fill="#d8d8d8" textLength="10.6">600</text><path d="M7.5 261.75 H11" stroke="#a8a8a8" stroke-width="1.1"/><path d="M7.5 265.42 H11" stroke="#a8a8a8" stroke-width="1.1"/><path d="M7.5 269.08 H11" stroke="#a8a8a8" stroke-width="1.1"/><path d="M7.5 272.75 H11" stroke="#a8a8a8" stroke-width="1.1"/><path d="M7.5 276.42 H11" stroke="#a8a8a8" stroke-width="1.1"/><path d="M7.5 280.09 H11" stroke="#a8a8a8" stroke-width="1.1"/><path d="M7.5 283.76 H11" stroke="#a8a8a8" stroke-width="1.1"/><path d="M7.5 287.42 H11" stroke="#a8a8a8" stroke-width="1.1"/><path d="M7.5 291.09 H11" stroke="#a8a8a8" stroke-width="1.1"/><path d="M1 294.76 H11" stroke="#8a8a8a" stroke-width="1"/><text x="0" y="0" transform="translate(1.3 296.26) rotate(90)" font-family="Liberation Sans" font-size="7" fill="#d8d8d8" textLength="10.6">700</text><path d="M7.5 298.43 H11" stroke="#a8a8a8" stroke-width="1.1"/><path d="M7.5 302.10 H11" stroke="#a8a8a8" stroke-width="1.1"/><path d="M7.5 305.76 H11" stroke="#a8a8a8" stroke-width="1.1"/><path d="M7.5 309.43 H11" stroke="#a8a8a8" stroke-width="1.1"/><path d="M7.5 313.10 H11" stroke="#a8a8a8" stroke-width="1.1"/><path d="M7.5 316.77 H11" stroke="#a8a8a8" stroke-width="1.1"/><path d="M7.5 320.44 H11" stroke="#a8a8a8" stroke-width="1.1"/><path d="M7.5 324.10 H11" stroke="#a8a8a8" stroke-width="1.1"/><path d="M7.5 327.77 H11" stroke="#a8a8a8" stroke-width="1.1"/><path d="M1 331.44 H11" stroke="#8a8a8a" stroke-width="1"/><text x="0" y="0" transform="translate(1.3 332.94) rotate(90)" font-family="Liberation Sans" font-size="7" fill="#d8d8d8" textLength="10.6">800</text><path d="M7.5 335.11 H11" stroke="#a8a8a8" stroke-width="1.1"/><path d="M7.5 338.78 H11" stroke="#a8a8a8" stroke-width="1.1"/><path d="M7.5 342.44 H11" stroke="#a8a8a8" stroke-width="1.1"/><path d="M7.5 346.11 H11" stroke="#a8a8a8" stroke-width="1.1"/><path d="M7.5 349.78 H11" stroke="#a8a8a8" stroke-width="1.1"/><path d="M7.5 353.45 H11" stroke="#a8a8a8" stroke-width="1.1"/><path d="M7.5 357.12 H11" stroke="#a8a8a8" stroke-width="1.1"/><path d="M7.5 360.78 H11" stroke="#a8a8a8" stroke-width="1.1"/><path d="M7.5 364.45 H11" stroke="#a8a8a8" stroke-width="1.1"/><path d="M1 368.12 H11" stroke="#8a8a8a" stroke-width="1"/><text x="0" y="0" transform="translate(1.3 369.62) rotate(90)" font-family="Liberation Sans" font-size="7" fill="#d8d8d8" textLength="10.6">900</text><path d="M7.5 371.79 H11" stroke="#a8a8a8" stroke-width="1.1"/><path d="M7.5 375.46 H11" stroke="#a8a8a8" stroke-width="1.1"/><path d="M7.5 379.12 H11" stroke="#a8a8a8" stroke-width="1.1"/><path d="M7.5 382.79 H11" stroke="#a8a8a8" stroke-width="1.1"/><path d="M7.5 386.46 H11" stroke="#a8a8a8" stroke-width="1.1"/><path d="M7.5 390.13 H11" stroke="#a8a8a8" stroke-width="1.1"/><path d="M7.5 393.80 H11" stroke="#a8a8a8" stroke-width="1.1"/><path d="M7.5 397.46 H11" stroke="#a8a8a8" stroke-width="1.1"/><path d="M7.5 401.13 H11" stroke="#a8a8a8" stroke-width="1.1"/><path d="M1 404.80 H11" stroke="#8a8a8a" stroke-width="1"/><text x="0" y="0" transform="translate(1.3 406.30) rotate(90)" font-family="Liberation Sans" font-size="7" fill="#d8d8d8" textLength="14.2">1000</text></svg>
<svg class="ic" style="left:254px;top:59px" width="11" height="12" viewBox="0 0 11 12"><path d="M4 1 V11 M8 1 V11 M1 5 H11 M1 9 H11" stroke="#bdbdbd" stroke-width="0.8"/></svg>
<div class="a" style="left:548px;top:60px;width:1.2px;height:10px;background:#2d8ceb"></div>
<div class="a" style="left:254px;top:471px;width:11px;height:1.2px;background:#2d8ceb"></div>
<div class="a" style="left:1101px;top:59px;width:1px;height:417px;background:#1a1a1a"></div>
<div class="a" style="left:406px;top:87px;width:369px;height:30px;border:1px solid #8a8a9a;border-bottom:none"></div>
<div class="a" style="left:265px;top:109px;width:700px;height:365px;background:#8ec740;box-shadow:0 0 0 1px #15121a"></div>
<div class="a" style="left:254px;top:474px;width:848px;height:2px;background:#1b1b1b"></div>
<!-- comp bottom bar -->
<div class="a" style="left:254px;top:476px;width:848px;height:18px;background:#232323"></div>
<div class="a" style="left:258px;top:479px;width:50px;height:13px;background:#1e1e1e;border-radius:2px"></div>
<div class="t" style="left:263px;top:481.5px;font-size:8.6px;color:#bdbdbd">50%</div>
<svg class="ic" style="left:298px;top:483.5px" width="7" height="5" viewBox="0 0 7 5"><path d="M0.8 1 L3.5 4 L6.2 1" stroke="#bbb" stroke-width="1" fill="none"/></svg>
<div class="sep" style="left:312px;top:479px;height:13px;background:#333"></div>
<div class="a" style="left:316px;top:479px;width:63px;height:13px;background:#1e1e1e;border-radius:2px"></div>
<div class="t" style="left:321px;top:481.5px;font-size:8.6px;color:#bdbdbd">Full</div>
<svg class="ic" style="left:369px;top:483.5px" width="7" height="5" viewBox="0 0 7 5"><path d="M0.8 1 L3.5 4 L6.2 1" stroke="#bbb" stroke-width="1" fill="none"/></svg>
<div class="sep" style="left:382px;top:479px;height:13px;background:#333"></div>
<div class="a" style="left:387px;top:478px;width:16px;height:15px;background:#1a1a1a;border-radius:2px"></div>
<svg class="ic" style="left:389px;top:480px" width="12" height="11" viewBox="0 0 12 11"><rect x="0.7" y="0.7" width="10.6" height="8.6" fill="none" stroke="#cfcfcf" stroke-width="1.2"/><path d="M4 3 L6.5 5 L4 7 Z M7 7 L10 7 L8.5 9Z" fill="#cfcfcf"/></svg>
<svg class="ic" style="left:409px;top:480px" width="12" height="11" viewBox="0 0 12 11"><rect x="0.7" y="0.7" width="10.6" height="9.6" fill="none" stroke="#cfcfcf" stroke-width="1.2"/><circle cx="4" cy="4" r="1" fill="#cfcfcf"/><circle cx="8" cy="4" r="1" fill="#cfcfcf"/><circle cx="4" cy="7" r="1" fill="#cfcfcf"/><circle cx="8" cy="7" r="1" fill="#cfcfcf"/></svg>
<div class="a" style="left:420px;top:478px;width:16px;height:15px;background:#1a1a1a;border-radius:2px"></div>
<svg class="ic" style="left:422px;top:480px" width="12" height="11" viewBox="0 0 12 11"><path d="M3 1 L11 1 L10 10 L1 10 Z" fill="none" stroke="#2d8ceb" stroke-width="1.2"/></svg>
<svg class="ic" style="left:437px;top:480px" width="12" height="11" viewBox="0 0 12 11"><rect x="0.7" y="0.7" width="10.6" height="9.6" fill="none" stroke="#cfcfcf" stroke-width="1.2"/><rect x="3" y="4" width="6" height="3.5" fill="#cfcfcf"/></svg>
<svg class="ic" style="left:455px;top:479px" width="12" height="13" viewBox="0 0 12 13"><rect x="0.7" y="1" width="10.6" height="8" fill="none" stroke="#cfcfcf" stroke-width="1.2"/><path d="M3 5 H9 M6 2.5 V7.5" stroke="#cfcfcf" stroke-width="1"/><path d="M8 10.5 L11 10.5 L9.5 12.5Z" fill="#cfcfcf"/></svg>
<div class="sep" style="left:471px;top:479px;height:13px;background:#333"></div>
<svg class="ic" style="left:479px;top:480px" width="11" height="12" viewBox="0 0 11 12"><circle cx="5" cy="3" r="2.5" fill="#e0322c"/><circle cx="3" cy="6.5" r="2.5" fill="#2fb54a"/><circle cx="7" cy="6.5" r="2.5" fill="#3a6fe3"/><path d="M7 10 L10 10 L8.5 12Z" fill="#cfcfcf"/></svg>
<svg class="ic" style="left:493px;top:480px" width="11" height="11" viewBox="0 0 11 11"><circle cx="5.5" cy="5.5" r="4.8" fill="#d0d0d0"/><circle cx="5.5" cy="5.5" r="2" fill="#232323"/><path d="M5.5 0.7 L4 4 M10.3 5.5 L7 4 M5.5 10.3 L7 7 M0.7 5.5 L4 7" stroke="#232323" stroke-width=".9"/></svg>
<div class="t" style="left:508px;top:481.5px;font-size:8.6px;color:#3a8fe5">+0.0</div>
<div class="sep" style="left:535px;top:479px;height:13px;background:#333"></div>
<svg class="ic" style="left:541px;top:480px" width="12" height="10" viewBox="0 0 12 10"><path d="M0.5 2.5 H3.5 L4.5 0.8 H7.5 L8.5 2.5 H11.5 V9.5 H0.5 Z" fill="#d0d0d0"/><circle cx="6" cy="5.8" r="2.2" fill="#232323"/><circle cx="6" cy="5.8" r="1.2" fill="#d0d0d0"/></svg>
<svg class="ic" style="left:557px;top:479px" width="10" height="12" viewBox="0 0 10 12"><path d="M2 11 L9 3 M1 8 L6 2 L9 5" stroke="#4a4a4a" stroke-width="1.4" fill="none"/></svg>
<div class="sep" style="left:576px;top:479px;height:13px;background:#333"></div>
<div class="a" style="left:580px;top:478.5px;width:50px;height:14px;background:#1c1c1c;border-radius:2px"></div>
<div class="t" style="left:585px;top:481.5px;font-size:8.6px;color:#b8b8b8">0;00;03;19</div>
<div class="sep" style="left:634px;top:479px;height:13px;background:#333"></div>
<!-- MONITOR ILLUSTRATION -->
<div class="a" style="left:387px;top:143.5px;width:450px;height:236px;background:#13181d"></div>
<div class="a" style="left:387px;top:379px;width:450px;height:43px;background:#d3d9e0"></div>
<div class="a" style="left:556.5px;top:421.5px;width:97px;height:6px;background:#a9aaae"></div>
<div class="a" style="left:556.5px;top:427px;width:97px;height:21px;background:#e6e7e8"></div>
<svg class="ic" style="left:538px;top:447px" width="134" height="27" viewBox="0 0 134 27"><path d="M18.5 1 H115.5 Q115.5 18.5 133 18.5 H1 Q18.5 18.5 18.5 1 Z" fill="#a9aaae"/><rect x="1" y="18.5" width="132" height="6" fill="#e6e7ea"/></svg>
<!-- app window -->
<div class="a" style="left:393.5px;top:149px;width:437px;height:222px;background:#e3e4e6;overflow:hidden">
  <div class="a" style="left:0;top:0;width:437px;height:11px;background:#1494ef"></div>
  <svg class="ic" style="left:4px;top:1.5px" width="9" height="8" viewBox="0 0 9 8"><circle cx="4.5" cy="1.8" r="1.6" fill="#fff"/><path d="M0.5 8 V5 Q0.5 3.6 2 3.6 H7 Q8.5 3.6 8.5 5 V8 Z" fill="#fff"/><path d="M4.5 3.6 V8" stroke="#1494ef" stroke-width=".8"/></svg>
  <div class="t" style="left:15px;top:2.5px;font-size:6.6px;font-weight:bold;color:#fff;letter-spacing:-0.22px">BADGEPASS VISITOR MANAGER</div>
  <div class="a" style="left:400.5px;top:5.8px;width:5px;height:1.2px;background:#fff"></div>
  <svg class="ic" style="left:413.5px;top:2.5px" width="6" height="6" viewBox="0 0 6 6"><rect x="0.6" y="1.8" width="3.6" height="3.6" fill="none" stroke="#fff" stroke-width="1"/><path d="M1.8 0.6 H5.4 V4.2" fill="none" stroke="#fff" stroke-width="1"/></svg>
  <svg class="ic" style="left:428.5px;top:2.5px" width="6" height="6" viewBox="0 0 6 6"><path d="M0.5 0.5 L5.5 5.5 M5.5 0.5 L0.5 5.5" stroke="#fff" stroke-width="1.2"/></svg>
  <div class="a" style="left:0;top:11px;width:437px;height:9px;background:#e2dfdf"></div>
  <div class="a" style="left:3px;top:11px;width:27px;height:9px;background:#ebebeb"></div>
  <div class="t" style="left:7px;top:12.5px;font-size:6.3px;color:#222">Home</div>
  <div class="t" style="left:36px;top:12.5px;font-size:6.3px;color:#222">Visitor Info</div>
  <div class="t" style="left:78px;top:12.5px;font-size:6.3px;color:#222">Options</div>
  <div class="a" style="left:0;top:20px;width:437px;height:29px;background:#e8e9eb"></div>
  <svg class="ic" style="left:18px;top:22px" width="12" height="13" viewBox="0 0 12 13"><path d="M3 1 H9 Q11 1 11 3.5 V8 Q11 12 6 12 Q1 12 1 8 V3.5 Q1 1 3 1 Z" fill="#2d9be8"/><rect x="3.5" y="4" width="5" height="3" fill="#fff"/><rect x="3" y="7.5" width="6" height="1" fill="#fff"/></svg>
  <div class="t" style="left:7px;top:37.5px;font-size:6.3px;color:#2d9be8">Print Badge</div>
  <svg class="ic" style="left:58px;top:22px" width="11" height="13" viewBox="0 0 11 13"><path d="M5.5 12.5 L1.5 7.5 A4.5 4.5 0 1 1 9.5 7.5 Z" fill="#2d9be8"/><circle cx="5.5" cy="5" r="2.3" fill="none" stroke="#fff" stroke-width="1"/></svg>
  <div class="t" style="left:47px;top:37.5px;font-size:6.3px;color:#2d9be8">Onsite List</div>
  <svg class="ic" style="left:96px;top:24px" width="13" height="10" viewBox="0 0 13 10"><path d="M0 1 H5 L6 2 H13 V10 H0 Z" fill="#2d9be8"/></svg>
  <div class="t" style="left:91px;top:37.5px;font-size:6.3px;color:#2d9be8">R</div>
  <div class="a" style="left:0;top:49px;width:437px;height:2px;background:#d7d7d9"></div>
  <!-- search panel -->
  <div class="a" style="left:3.5px;top:50px;width:100px;height:105px;background:#f3f3f3;border:1px solid #e0e0e0"></div>
  <div class="a" style="left:100px;top:50px;width:171px;height:100px;background:#f3f3f3"></div>
  <div class="t" style="left:7px;top:55px;font-size:6.3px;font-weight:bold;color:#2d9be8">Search</div>
  <div class="t" style="left:11px;top:65px;font-size:6.3px;color:#2d9be8">Last Name</div>
  <div class="a" style="left:11px;top:73px;width:236px;height:13px;background:#fafafa;border:1px solid #e4e4e4"></div>
  <div class="t" style="left:11px;top:90px;font-size:6.3px;color:#2d9be8">First Name</div>
  <div class="a" style="left:11px;top:99px;width:236px;height:13px;background:#fafafa;border:1px solid #e4e4e4"></div>
  <div class="t" style="left:11px;top:115px;font-size:6.3px;color:#2d9be8">ID#</div>
  <div class="a" style="left:11px;top:124px;width:236px;height:13px;background:#fafafa;border:1px solid #e4e4e4"></div>
  <div class="a" style="left:60px;top:143px;width:35px;height:8.5px;background:#f8f8f8;border:1px solid #c8c8c8"></div>
  <div class="t" style="left:67px;top:144.5px;font-size:6px;color:#222">Search</div>
  <!-- right of search panel: middle panel -->
  
  <div class="a" style="left:256.5px;top:73px;width:11px;height:13px;background:#e6e6e6"></div><svg class="ic" style="left:259.5px;top:78px" width="6" height="4" viewBox="0 0 6 4"><path d="M0.6 0.6 L3 3 L5.4 0.6" stroke="#555" stroke-width="1" fill="none"/></svg>
  <div class="a" style="left:256.5px;top:99.5px;width:11px;height:13px;background:#1494ef"></div>
  <svg class="ic" style="left:258.5px;top:102px" width="7" height="8" viewBox="0 0 7 8"><circle cx="4" cy="3" r="2" fill="none" stroke="#fff" stroke-width="1"/><path d="M2.5 4.5 L0.7 6.8" stroke="#fff" stroke-width="1.2"/></svg>
  <!-- comments -->
  <div class="a" style="left:3.5px;top:159px;width:267px;height:31px;background:#f3f3f3;border:1px solid #e0e0e0"></div>
  <div class="t" style="left:7px;top:162.5px;font-size:6.3px;font-weight:bold;color:#2d9be8">Comments</div>
  <div class="a" style="left:7.5px;top:171.5px;width:260px;height:16px;background:#f7f7f7;border:1px solid #9cc8e6;border-radius:1px"></div>
  <!-- finish -->
  <div class="a" style="left:3.5px;top:194px;width:267px;height:25px;background:#f3f3f3;border:1px solid #e0e0e0"></div>
  <div class="t" style="left:7px;top:198px;font-size:6.3px;font-weight:bold;color:#2d9be8">Finish</div>
  <div class="a" style="left:37.5px;top:206px;width:35px;height:9px;background:#1494ef"></div>
  <div class="t" style="left:42px;top:207.5px;font-size:6.2px;color:#fff">Check In</div>
  <div class="a" style="left:116px;top:206px;width:35px;height:9px;background:#1494ef"></div>
  <div class="t" style="left:126px;top:207.5px;font-size:6.2px;color:#fff">Clear</div>
  <div class="a" style="left:187px;top:206px;width:49px;height:9px;background:#1494ef"></div>
  <div class="t" style="left:192px;top:207.5px;font-size:6.2px;color:#fff">Deny Access</div>
  <!-- blue right panel -->
  <div class="a" style="left:274.5px;top:50px;width:159px;height:168px;background:#1494ef"></div>
  <div class="a" style="left:324.5px;top:50px;width:109px;height:12px;background:#8cc63f"></div>
  <div class="t" style="left:286.5px;top:52.9px;font-size:6.3px;letter-spacing:0.1px;color:#eaf5ff;">Status:</div>
  <div class="t" style="left:358.8px;top:52.9px;font-size:6.3px;letter-spacing:0.2px;color:#fff;">CHECKED-IN</div>
  <div class="t" style="left:278.9px;top:64.6px;font-size:7.1px;font-weight:bold;letter-spacing:0.15px;color:#fff;">JACKSON, HENRY</div>
  <div class="t" style="left:387.3px;top:65.2px;font-size:7.6px;letter-spacing:0.1px;color:#fff;">Photo</div>
  <div class="t" style="right:132.2px;top:74.9px;font-size:6.2px;font-weight:bold;letter-spacing:0.1px;color:#fff;">Gender</div>
  <div class="t" style="left:311.9px;top:74.8px;font-size:6.4px;letter-spacing:0.4px;color:#fff;">Male</div>
  <div class="t" style="right:132.5px;top:85.4px;font-size:6.2px;font-weight:bold;letter-spacing:0.1px;color:#fff;">ID#</div>
  <div class="t" style="left:311.9px;top:85.3px;font-size:6.4px;letter-spacing:0.75px;color:#fff;">1234567890</div>
  <div class="t" style="right:132.5px;top:95.4px;font-size:6.2px;font-weight:bold;letter-spacing:0.1px;color:#fff;">Type</div>
  <div class="t" style="left:311.7px;top:95.3px;font-size:6.4px;letter-spacing:0.4px;color:#fff;">Visitor</div>
  <div class="t" style="left:278.9px;top:108.0px;font-size:6.3px;letter-spacing:0.35px;color:#fff;text-decoration:underline;">Edit Visitor</div>
  <div class="t" style="left:279.2px;top:121.4px;font-size:7px;font-weight:bold;letter-spacing:0.2px;color:#fff;">Additional Information</div>
  <div class="t" style="left:282.9px;top:130.5px;font-size:7px;font-weight:bold;letter-spacing:0.1px;color:#fff;">Company</div>
  <div class="t" style="left:348.8px;top:130.4px;font-size:7.2px;font-weight:bold;letter-spacing:0.5px;color:#fff;">N/A</div>
  <div class="t" style="left:383.5px;top:131.9px;font-size:7.2px;letter-spacing:0.6px;color:#fff;text-decoration:underline;">Capture</div>
  <div class="t" style="left:282.3px;top:144.2px;font-size:6.2px;font-weight:bold;letter-spacing:0.1px;color:#fff;">Visit History</div>
  <div class="t" style="right:111.9px;top:157.1px;font-size:6.2px;font-weight:bold;letter-spacing:0.1px;color:#fff;">Date/Time</div>
  <div class="t" style="left:332.5px;top:157.0px;font-size:6.4px;letter-spacing:0.55px;color:#fff;">3/15/2021 1:04:25 PM</div>
  <div class="t" style="right:111.9px;top:167.3px;font-size:6.2px;font-weight:bold;letter-spacing:0.1px;color:#fff;">Location</div>
  <div class="t" style="left:332.5px;top:167.2px;font-size:6.4px;letter-spacing:0.55px;color:#fff;">Cafeteria</div>
  <div class="t" style="right:111.9px;top:177.6px;font-size:6.2px;font-weight:bold;letter-spacing:0.1px;color:#fff;">Visit Purpose</div>
  <div class="t" style="left:332.5px;top:177.5px;font-size:6.4px;letter-spacing:0.55px;color:#fff;">Event</div>
  <div class="t" style="right:111.9px;top:187.9px;font-size:6.2px;font-weight:bold;letter-spacing:0.1px;color:#fff;">Action</div>
  <div class="t" style="left:332.5px;top:187.8px;font-size:6.4px;letter-spacing:0.55px;color:#fff;">Check In</div>
  <div class="t" style="right:111.9px;top:198.3px;font-size:6.2px;font-weight:bold;letter-spacing:0.1px;color:#fff;">Source</div>
  <div class="t" style="left:332.5px;top:198.2px;font-size:6.4px;letter-spacing:0.55px;color:#fff;">admin</div>
  <svg class="ic" style="left:310px;top:210.5px" width="6" height="5" viewBox="0 0 6 5"><path d="M0 0.3 L2.3 2.5 L0 4.7Z M2.3 0.3 L4.6 2.5 L2.3 4.7Z" fill="#fff"/><rect x="4.8" y="0.3" width="1" height="4.4" fill="#fff"/></svg>
  <div class="t" style="left:409.0px;top:209.1px;font-size:6.9px;letter-spacing:0.2px;color:#fff;">1 of 32</div>
  <div class="a" style="left:426px;top:109px;width:6.5px;height:69px;background:#fff"></div>
  <svg class="ic" style="left:370px;top:97px" width="4" height="6" viewBox="0 0 4 6"><path d="M4 0 V6 L0 3Z" fill="#fff"/></svg>
  <svg class="ic" style="left:422px;top:97px" width="4" height="6" viewBox="0 0 4 6"><path d="M0 0 V6 L4 3Z" fill="#fff"/></svg>
  <!-- photo -->
  <div class="a" style="left:378px;top:74.5px;width:40.5px;height:53.5px;background:#fff;overflow:hidden">
    <svg class="ic" style="left:0;top:0" width="41" height="54" viewBox="0 0 41 54"><path d="M0 54 V49 Q0 45 10 45 Q20 43.5 31 45 Q41 45 41 49 V54Z" fill="#1d66ad"/><rect x="15" y="36" width="10.5" height="16" rx="5" fill="#f08a62"/><circle cx="4.5" cy="23.5" r="3" fill="#ec8560"/><circle cx="36" cy="23.5" r="3" fill="#ec8560"/><ellipse cx="20.5" cy="23" rx="14" ry="15.6" fill="#f28d66"/><path d="M5.5 26 Q3.5 10 14 5 Q22 1 30 3 L33 1 L33.5 4 L36 3 L35 7 Q38 12 36 26 Q34 16 30 13 Q20 16 9 14 Q7 18 5.5 26Z" fill="#5b3519"/><circle cx="14" cy="28" r="1.9" fill="#1a1010"/><circle cx="26.5" cy="28" r="1.9" fill="#1a1010"/><path d="M11 23.5 Q14 21 17 23.5 M23.5 23.5 Q26.5 21 29.5 23.5" stroke="#5b3519" stroke-width="1" fill="none"/><circle cx="20.3" cy="31" r="1.7" fill="#e07a5a"/><path d="M16.5 35 Q20.5 37.5 24.5 35" stroke="#d56a50" stroke-width=".9" fill="none"/></svg>
  </div>
  <div class="a" style="left:433.5px;top:50px;width:4px;height:172px;background:#e8e8e8"></div>
  <div class="a" style="left:0;top:218px;width:437px;height:4px;background:#e8e8e8"></div>
</div>
<!-- MAGNIFIER -->
<svg class="ic" style="left:0;top:0" width="1280" height="720" viewBox="0 0 1280 720">
  <defs><clipPath id="lens"><circle cx="561.5" cy="241.5" r="72.5"/></clipPath></defs>
  <g clip-path="url(#lens)">
    <rect x="480" y="150" width="170" height="180" fill="#e7e8ea"/>
    <rect x="503" y="205" width="150" height="130" fill="#dfdfe1"/>
    <rect x="512" y="211" width="150" height="120" fill="#f4f4f5"/>
    <rect x="525" y="269" width="140" height="29.5" fill="#e9e9ea" stroke="#dadada" stroke-width="1"/>
    <circle cx="561.5" cy="241.5" r="71" fill="none" stroke="#fbfbfb" stroke-width="4"/>
    <text x="520.5" y="237.5" font-family="Liberation Sans" font-weight="bold" font-size="15.5" fill="#2d9be8" textLength="79">Define Visit</text>
    <text x="526.5" y="256.5" font-family="Liberation Sans" font-size="15" fill="#2d9be8" textLength="88">Visit Purpose</text>
    <text x="533.5" y="288.5" font-family="Liberation Sans" font-size="15" fill="#4aa5ec" textLength="38">Event</text>
    <text x="535" y="320.5" font-family="Liberation Sans" font-size="15" fill="#2d9be8" textLength="52">Location</text>
    <path d="M506 250 V228 Q506 190 546 178 L556 177" stroke="#ffffff" stroke-opacity="0.75" stroke-width="10" stroke-linecap="round" fill="none"/>
  </g>
  <circle cx="561.5" cy="241.5" r="68.9" fill="none" stroke="#2a3a2c" stroke-width="1.1"/>
  <g transform="translate(561.5 241.5) rotate(45)">
    <rect x="84" y="-12.5" width="13" height="25" fill="#4858c0"/>
    <rect x="84" y="-12.5" width="13" height="12" fill="#3e4cb0"/>
    <path d="M96 -14 H187 A14 14 0 0 1 187 14 H96 Z" fill="#67a2f2"/>
    <path d="M96 -14 H187 A14 14 0 0 1 200.67 3 H96 Z" fill="#5b8de3"/>
  </g>
  <circle cx="561.5" cy="241.5" r="80.5" fill="none" stroke="#3e46a1" stroke-width="15.8"/>
  <circle cx="561.5" cy="172.5" r="3" fill="none" stroke="#111" stroke-width="1"/>
  <circle cx="561.5" cy="172.5" r="1.8" fill="#111"/>
  <circle cx="492.5" cy="241.5" r="2" fill="#111"/>
  <circle cx="630.5" cy="241.5" r="2" fill="#111"/>
  <circle cx="561.5" cy="310.5" r="2" fill="#111"/>
  <!-- motion path -->
  <path d="M265 425 L693 464 L712 476" stroke="#6e6e5a" stroke-width="1.2" fill="none"/>
  <g fill="#b79a72"><circle cx="275" cy="426" r="1"/><circle cx="307" cy="429" r="1"/><circle cx="339" cy="432" r="1"/><circle cx="371" cy="435" r="1"/><circle cx="403" cy="438" r="1"/><circle cx="435" cy="441" r="1"/><circle cx="466" cy="444" r="1"/><circle cx="497" cy="446" r="1"/><circle cx="526" cy="449" r="1"/><circle cx="556" cy="452" r="1"/><circle cx="581" cy="454" r="1"/><circle cx="606" cy="457" r="1"/><circle cx="629" cy="458" r="1"/><circle cx="648" cy="460" r="1"/><circle cx="665" cy="462" r="1"/></g>
  <g transform="translate(693.5 464)"><path d="M0 -7 L2 -2 L7 0 L2 2 L0 7 L-2 2 L-7 0 L-2 -2 Z" fill="#c8c2b4"/><circle cx="0" cy="0" r="3" fill="#6a6a5a"/><circle cx="0" cy="0" r="1.5" fill="#c8c2b4"/></g>
</svg>
<!-- RIGHT PANELS -->
<div class="pan" style="left:1105px;top:20px;width:159px;height:474px"></div>
<div class="t n" style="left:1114px;top:25.6px;font-size:9px;color:#a8a8a8">Info</div>
<div class="a" style="left:1105px;top:40px;width:150px;height:2px;background:#1b1b1b"></div>
<div class="t n" style="left:1114px;top:47.6px;font-size:9px;color:#a8a8a8">Audio</div>
<div class="a" style="left:1105px;top:62px;width:150px;height:2px;background:#1b1b1b"></div>
<div class="t n" style="left:1114px;top:69.6px;font-size:9px;color:#a8a8a8">Preview</div>
<div class="a" style="left:1105px;top:84px;width:150px;height:2px;background:#1b1b1b"></div>
<div class="t n" style="left:1114px;top:91.6px;font-size:9px;color:#a8a8a8">Effects &amp; Presets</div>
<div class="a" style="left:1105px;top:106px;width:150px;height:2px;background:#1b1b1b"></div>
<div class="t n" style="left:1114px;top:113.6px;font-size:9px;color:#a8a8a8">Libraries</div>
<div class="a" style="left:1105px;top:128px;width:150px;height:2px;background:#1b1b1b"></div>
<div class="t n" style="left:1114px;top:135.6px;font-size:9px;color:#a8a8a8">Character</div>
<div class="a" style="left:1105px;top:150px;width:150px;height:2px;background:#1b1b1b"></div>
<div class="t n" style="left:1114px;top:157.6px;font-size:9px;color:#a8a8a8">Paragraph</div>
<div class="a" style="left:1105px;top:172px;width:150px;height:2px;background:#1b1b1b"></div>
<div class="t n" style="left:1114px;top:179.6px;font-size:9px;color:#a8a8a8">Tracker</div>
<div class="a" style="left:1105px;top:194px;width:150px;height:2px;background:#1b1b1b"></div>
<div class="t n" style="left:1114px;top:201.6px;font-size:9px;color:#a8a8a8">Content-Aware Fill</div>
<div class="a" style="left:1105px;top:216px;width:150px;height:2px;background:#1b1b1b"></div>
<div class="t n" style="left:1114px;top:223.6px;font-size:9px;color:#c4c4c4">Align</div>
<svg class="ic" style="left:1242px;top:225px" width="7" height="7" viewBox="0 0 7 7"><path d="M0 1 H7 M0 3.5 H7 M0 6 H7" stroke="#b0b0b0" stroke-width="1"/></svg>
<div class="t n" style="left:1110px;top:243px;font-size:8.6px;color:#9a9a9a">Align Layers to:</div>
<div class="a" style="left:1173px;top:240.5px;width:80px;height:13px;background:#1c1c1c;border-radius:2px"></div>
<div class="t n" style="left:1179px;top:243px;font-size:8.6px;color:#c8c8c8">Composition</div>
<svg class="ic" style="left:1243px;top:245px" width="7" height="5" viewBox="0 0 7 5"><path d="M0.8 1 L3.5 4 L6.2 1" stroke="#bbb" stroke-width="1" fill="none"/></svg>
<svg class="ic" style="left:1113px;top:258px" width="13" height="13" viewBox="0 0 13 13"><path d="M1 0 V13" stroke="#cfcfcf" stroke-width="1.3"/><rect x="2" y="2.5" width="7" height="3" fill="#cfcfcf"/><rect x="2" y="7.5" width="10" height="3" fill="#cfcfcf"/></svg>
<svg class="ic" style="left:1138px;top:258px" width="13" height="13" viewBox="0 0 13 13"><path d="M6.5 0 V13" stroke="#cfcfcf" stroke-width="1.3"/><rect x="3" y="2.5" width="7" height="3" fill="#cfcfcf"/><rect x="1.5" y="7.5" width="10" height="3" fill="#cfcfcf"/></svg>
<svg class="ic" style="left:1163px;top:258px" width="13" height="13" viewBox="0 0 13 13"><path d="M12 0 V13" stroke="#cfcfcf" stroke-width="1.3"/><rect x="4" y="2.5" width="7" height="3" fill="#cfcfcf"/><rect x="1" y="7.5" width="10" height="3" fill="#cfcfcf"/></svg>
<svg class="ic" style="left:1188px;top:258px" width="13" height="13" viewBox="0 0 13 13"><path d="M0 1 H13" stroke="#cfcfcf" stroke-width="1.3"/><rect x="2.5" y="2" width="3" height="10" fill="#cfcfcf"/><rect x="7.5" y="2" width="3" height="7" fill="#cfcfcf"/></svg>
<svg class="ic" style="left:1213px;top:258px" width="13" height="13" viewBox="0 0 13 13"><path d="M0 6.5 H13" stroke="#cfcfcf" stroke-width="1.3"/><rect x="2.5" y="1.5" width="3" height="10" fill="#cfcfcf"/><rect x="7.5" y="3" width="3" height="7" fill="#cfcfcf"/></svg>
<svg class="ic" style="left:1238px;top:258px" width="13" height="13" viewBox="0 0 13 13"><path d="M0 12 H13" stroke="#cfcfcf" stroke-width="1.3"/><rect x="2.5" y="1" width="3" height="10" fill="#cfcfcf"/><rect x="7.5" y="4" width="3" height="7" fill="#cfcfcf"/></svg>
<div class="a" style="left:1109px;top:275px;width:146px;height:1px;background:#333"></div>
<div class="t n" style="left:1110px;top:279px;font-size:8.6px;color:#8a8a8a">Distribute Layers:</div>
<svg class="ic" style="left:1113px;top:290px" width="13" height="13" viewBox="0 0 13 13"><path d="M1 1 H12 M1 12 H12" stroke="#4a4a4a" stroke-width="1"/><rect x="2" y="3" width="9" height="2.5" fill="#4a4a4a"/><rect x="2" y="8" width="9" height="2.5" fill="#4a4a4a"/></svg>
<svg class="ic" style="left:1138px;top:290px" width="13" height="13" viewBox="0 0 13 13"><path d="M1 4 H12 M1 9.5 H12" stroke="#4a4a4a" stroke-width="1"/><rect x="2" y="2.5" width="9" height="2.5" fill="#4a4a4a"/><rect x="2" y="8.5" width="9" height="2.5" fill="#4a4a4a"/></svg>
<svg class="ic" style="left:1163px;top:290px" width="13" height="13" viewBox="0 0 13 13"><path d="M1 3 H12 M1 11 H12" stroke="#4a4a4a" stroke-width="1"/><rect x="2" y="0.5" width="9" height="2.5" fill="#4a4a4a"/><rect x="2" y="8.5" width="9" height="2.5" fill="#4a4a4a"/></svg>
<svg class="ic" style="left:1188px;top:290px" width="13" height="13" viewBox="0 0 13 13"><path d="M1 1 V12 M12 1 V12" stroke="#4a4a4a" stroke-width="1"/><rect x="3" y="2" width="2.5" height="9" fill="#4a4a4a"/><rect x="8" y="3.5" width="2.5" height="6" fill="#4a4a4a"/></svg>
<svg class="ic" style="left:1213px;top:290px" width="13" height="13" viewBox="0 0 13 13"><path d="M4 1 V12 M9.5 1 V12" stroke="#4a4a4a" stroke-width="1"/><rect x="2.5" y="2" width="2.5" height="9" fill="#4a4a4a"/><rect x="8.5" y="3.5" width="2.5" height="6" fill="#4a4a4a"/></svg>
<svg class="ic" style="left:1238px;top:290px" width="13" height="13" viewBox="0 0 13 13"><path d="M3 1 V12 M11 1 V12" stroke="#4a4a4a" stroke-width="1"/><rect x="0.5" y="2" width="2.5" height="9" fill="#4a4a4a"/><rect x="8.5" y="3.5" width="2.5" height="6" fill="#4a4a4a"/></svg>
<!-- TIMELINE -->
<div class="pan" style="left:15px;top:497px;width:1250px;height:222px;background:#232323"></div>
<div class="a" style="left:15px;top:718.5px;width:1250px;height:1.5px;background:#3a3a3a"></div>
<div class="a" style="left:34px;top:504px;width:7px;height:7px;background:#c9b38a"></div>
<div class="t n" style="left:51px;top:503px;font-size:9px;color:#9a9a9a">MASTER</div>
<div class="t n" style="left:123px;top:503px;font-size:9px;color:#9a9a9a">Render Queue</div>
<div class="a" style="left:215px;top:504px;width:7px;height:7px;background:#c9b38a"></div>
<div class="t n" style="left:232px;top:503px;font-size:9px;color:#9a9a9a">adhesive-badge-printer</div>
<div class="a" style="left:357px;top:504px;width:7px;height:7px;background:#c9b38a"></div>
<div class="t n" style="left:374px;top:503px;font-size:9px;color:#9a9a9a">Comp 07 - 1</div>
<div class="a" style="left:458px;top:504px;width:7px;height:7px;background:#c9b38a"></div>
<div class="t n" style="left:474px;top:503px;font-size:9px;color:#9a9a9a">Comp 16</div>
<div class="a" style="left:548px;top:504px;width:7px;height:7px;background:#c9b38a"></div>
<div class="t n" style="left:564px;top:503px;font-size:9px;color:#9a9a9a">monitor-vm-banned</div>
<div class="a" style="left:679px;top:504px;width:7px;height:7px;background:#c9b38a"></div>
<div class="t n" style="left:694px;top:503px;font-size:9px;color:#9a9a9a">Comp 17</div>
<div class="a" style="left:770px;top:504px;width:7px;height:7px;background:#c9b38a"></div>
<div class="t n" style="left:783px;top:503px;font-size:9px;color:#9a9a9a">front-desk - static 03</div>
<div class="a" style="left:899px;top:504px;width:7px;height:7px;background:#c9b38a"></div>
<div class="t n" style="left:914px;top:503px;font-size:9px;color:#9a9a9a">Jerica - Standing - Frowning</div>
<div class="t" style="left:1045px;top:502px;font-size:9px;color:#8a8a8a">&#215;</div>
<div class="a" style="left:1058px;top:504px;width:7px;height:7px;background:#c9b38a"></div>
<div class="t n" style="left:1073px;top:503px;font-size:9px;color:#d0d0d0">Comp 18</div>
<svg class="ic" style="left:1113px;top:505px" width="7" height="7" viewBox="0 0 7 7"><path d="M0 1 H7 M0 3.5 H7 M0 6 H7" stroke="#b0b0b0" stroke-width="1"/></svg>
<div class="a" style="left:1046px;top:514px;width:74px;height:1.5px;background:#c8c8c8"></div>
<div class="t" style="left:27px;top:520.3px;font-size:11.3px;font-weight:bold;color:#2d8ceb;letter-spacing:0px">0;00;03;19</div>
<div class="t" style="left:23px;top:533px;font-size:7.6px;color:#2468b0">00109 (29.97 fps)</div>
<div class="a" style="left:93px;top:522.5px;width:417px;height:14px;background:#1a1a1a;border-radius:2px"></div>
<svg class="ic" style="left:99px;top:525px" width="12" height="9" viewBox="0 0 12 9"><circle cx="5" cy="3.5" r="2.6" fill="none" stroke="#d0d0d0" stroke-width="1.1"/><path d="M3.2 5.5 L0.8 8.2" stroke="#d0d0d0" stroke-width="1.2"/><path d="M8 6 L11 6 L9.5 7.8Z" fill="#d0d0d0"/></svg>
<svg class="ic" style="left:521px;top:524px" width="13" height="11" viewBox="0 0 13 11"><path d="M0 3 H6 L8 1 H13 M6 3 L8 6 H13 M8 6 V10 H13" stroke="#d0d0d0" stroke-width="1.2" fill="none"/></svg>
<svg class="ic" style="left:546px;top:524px" width="13" height="11" viewBox="0 0 13 11"><path d="M1 6 A5.5 5 0 0 1 12 6 Z" fill="#d0d0d0"/><rect x="1" y="7" width="11" height="3.5" fill="#d0d0d0"/><path d="M6.5 1 V10" stroke="#232323" stroke-width="1"/></svg>
<svg class="ic" style="left:569px;top:523px" width="12" height="12" viewBox="0 0 12 12"><rect x="3" y="0.5" width="8.5" height="8.5" fill="#d0d0d0"/><rect x="0.5" y="3" width="8.5" height="8.5" fill="#9a9a9a" stroke="#232323" stroke-width="1"/></svg>
<svg class="ic" style="left:585px;top:523px" width="13" height="12" viewBox="0 0 13 12"><rect x="1" y="3" width="11" height="6" rx="3" transform="rotate(-35 6.5 6)" fill="#2d8ceb"/><path d="M3 9 L10 3" stroke="#232323" stroke-width="0.8"/></svg>
<svg class="ic" style="left:609px;top:523px" width="13" height="12" viewBox="0 0 13 12"><rect x="0.7" y="1.5" width="11.5" height="9.5" fill="none" stroke="#d0d0d0" stroke-width="1.2"/><path d="M2 3 L5 3 L8 9 L11 9" stroke="#d0d0d0" stroke-width="1" fill="none"/><path d="M0 0 L3 3" stroke="#d0d0d0" stroke-width="1"/></svg>
<div class="a" style="left:15px;top:555.20px;width:619px;height:11.50px;background:#2b2b2b"></div>
<div class="a" style="left:15px;top:566.70px;width:619px;height:1px;background:#1c1c1c"></div>
<div class="a" style="left:18px;top:556.20px;width:10px;height:9.50px;background:#242424"></div>
<div class="a" style="left:31px;top:556.20px;width:9px;height:9.50px;background:#242424"></div>
<div class="a" style="left:43px;top:556.20px;width:8px;height:9.50px;background:#242424"></div>
<div class="a" style="left:52px;top:556.20px;width:9px;height:9.50px;background:#242424"></div>
<svg class="ic" style="left:19px;top:558.15px" width="10" height="7" viewBox="0 0 10 7"><path d="M0.5 3.5 Q5 -1.5 9.5 3.5 Q5 8.5 0.5 3.5Z" fill="#d8d8d8"/><circle cx="5" cy="3.5" r="1.6" fill="#232323"/></svg>
<svg class="ic" style="left:70px;top:558.15px" width="5" height="7" viewBox="0 0 5 7"><path d="M1 0.8 L4 3.5 L1 6.2" stroke="#9a9a9a" stroke-width="1" fill="none"/></svg>
<div class="a" style="left:79px;top:557.15px;width:7px;height:9px;background:#d9403a"></div>
<div class="t" style="left:93px;top:557.65px;font-size:8.5px;color:#c8c8c8">3</div>
<svg class="ic" style="left:114px;top:557.15px" width="9" height="9" viewBox="0 0 9 9"><path d="M0.3 0.3 H8.7 V2.6 H7.8 V1.4 H5.3 V7.7 H6.5 V8.7 H2.5 V7.7 H3.7 V1.4 H1.2 V2.6 H0.3 Z" fill="#d6d6d6"/></svg>
<div class="t" style="left:130px;top:557.15px;font-size:8.5px;color:#c4c4c4">&#8226; Visit... &#8226; Run Reports &#8226; Search for Information</div>
<div class="a" style="left:316px;top:556.00px;width:33px;height:9.90px;background:#1f1f1f"></div>
<div class="t" style="left:320px;top:557.45px;font-size:8.5px;color:#c8c8c8">Norr</div>
<svg class="ic" style="left:340px;top:559.65px" width="7" height="5" viewBox="0 0 7 5"><path d="M0.8 1 L3.5 4 L6.2 1" stroke="#c8c8c8" stroke-width="1" fill="none"/></svg>
<div class="a" style="left:353px;top:556.20px;width:10px;height:9.50px;background:#262626"></div>
<svg class="ic" style="left:366px;top:557.15px" width="9" height="9" viewBox="0 0 9 9"><path d="M4.5 4.5 m-1 0 a1 1 0 1 1 2 0 a2 2 0 1 1 -4 0 a3 3 0 1 1 6 0 a3.8 3.8 0 0 1 -6.5 2.5" stroke="#c8c8c8" stroke-width=".9" fill="none"/></svg>
<div class="a" style="left:378px;top:556.00px;width:32px;height:9.90px;background:#1f1f1f"></div>
<div class="t" style="left:383px;top:557.45px;font-size:8.5px;color:#c8c8c8">No &#923;</div>
<svg class="ic" style="left:401px;top:559.65px" width="7" height="5" viewBox="0 0 7 5"><path d="M0.8 1 L3.5 4 L6.2 1" stroke="#c8c8c8" stroke-width="1" fill="none"/></svg>
<div class="a" style="left:411px;top:555.70px;width:124px;height:10.50px;background:#353535"></div>
<div class="a" style="left:441px;top:556.20px;width:9px;height:9.50px;background:#2c2c2c"></div>
<div class="a" style="left:451px;top:556.20px;width:9px;height:9.50px;background:#2c2c2c"></div>
<div class="a" style="left:461px;top:556.20px;width:9px;height:9.50px;background:#2c2c2c"></div>
<div class="a" style="left:472px;top:556.20px;width:9px;height:9.50px;background:#2c2c2c"></div>
<div class="a" style="left:483px;top:556.20px;width:9px;height:9.50px;background:#2c2c2c"></div>
<div class="a" style="left:493px;top:556.20px;width:9px;height:9.50px;background:#2c2c2c"></div>
<div class="a" style="left:504px;top:556.20px;width:9px;height:9.50px;background:#2c2c2c"></div>
<div class="a" style="left:515px;top:556.20px;width:9px;height:9.50px;background:#2c2c2c"></div>
<svg class="ic" style="left:441px;top:557.15px" width="9" height="9" viewBox="0 0 9 9"><path d="M0.5 4.5 A4 4 0 0 1 8.5 4.5Z" fill="#d0d0d0"/><path d="M2 5 V8.5 M4.5 5 V8.5 M7 5 V8.5" stroke="#d0d0d0" stroke-width=".9"/></svg>
<svg class="ic" style="left:452px;top:557.65px" width="8" height="8" viewBox="0 0 8 8"><circle cx="4" cy="4" r="1.8" fill="#777"/><path d="M4 0 V8 M0 4 H8" stroke="#777" stroke-width=".9"/></svg>
<svg class="ic" style="left:462px;top:557.65px" width="8" height="8" viewBox="0 0 8 8"><path d="M0.5 7.5 L7.5 0.5" stroke="#d0d0d0" stroke-width="1.1"/></svg>
<svg class="ic" style="left:494px;top:557.65px" width="10" height="8" viewBox="0 0 10 8"><rect x="0.5" y="1.5" width="9" height="5" rx="2.5" transform="rotate(-35 5 4)" fill="#9a9a9a"/></svg>
<svg class="ic" style="left:540px;top:557.15px" width="9" height="9" viewBox="0 0 9 9"><path d="M4.5 4.5 m-1 0 a1 1 0 1 1 2 0 a2 2 0 1 1 -4 0 a3 3 0 1 1 6 0 a3.8 3.8 0 0 1 -6.5 2.5" stroke="#c8c8c8" stroke-width=".9" fill="none"/></svg>
<div class="a" style="left:553px;top:556.00px;width:64px;height:9.90px;background:#1f1f1f"></div>
<div class="t" style="left:558px;top:557.45px;font-size:8.5px;color:#c8c8c8">None</div>
<svg class="ic" style="left:607px;top:559.65px" width="7" height="5" viewBox="0 0 7 5"><path d="M0.8 1 L3.5 4 L6.2 1" stroke="#c8c8c8" stroke-width="1" fill="none"/></svg>
<div class="a" style="left:15px;top:567.70px;width:619px;height:11.50px;background:#2b2b2b"></div>
<div class="a" style="left:15px;top:579.20px;width:619px;height:1px;background:#1c1c1c"></div>
<div class="a" style="left:18px;top:568.70px;width:10px;height:9.50px;background:#242424"></div>
<div class="a" style="left:31px;top:568.70px;width:9px;height:9.50px;background:#242424"></div>
<div class="a" style="left:43px;top:568.70px;width:8px;height:9.50px;background:#242424"></div>
<div class="a" style="left:52px;top:568.70px;width:9px;height:9.50px;background:#242424"></div>
<svg class="ic" style="left:19px;top:570.65px" width="10" height="7" viewBox="0 0 10 7"><path d="M0.5 3.5 Q5 -1.5 9.5 3.5 Q5 8.5 0.5 3.5Z" fill="#d8d8d8"/><circle cx="5" cy="3.5" r="1.6" fill="#232323"/></svg>
<svg class="ic" style="left:70px;top:570.65px" width="5" height="7" viewBox="0 0 5 7"><path d="M1 0.8 L4 3.5 L1 6.2" stroke="#9a9a9a" stroke-width="1" fill="none"/></svg>
<div class="a" style="left:79px;top:569.65px;width:7px;height:9px;background:#b8b8d8"></div>
<div class="t" style="left:93px;top:570.15px;font-size:8.5px;color:#c8c8c8">4</div>
<svg class="ic" style="left:116px;top:569.15px" width="8" height="10" viewBox="0 0 8 10"><rect x="0.4" y="0.4" width="7.2" height="9.2" rx="1.5" fill="#2a1206" stroke="#c8700f" stroke-width=".8"/><path d="M4 1.8 L6.5 6.5 H1.5Z" fill="#f29a1c"/><rect x="3.2" y="6.3" width="1.8" height="1.8" fill="#ddd"/></svg>
<div class="t" style="left:130px;top:569.65px;font-size:8.5px;color:#c4c4c4">magnifying glass/magnifying-glass_two.ai</div>
<div class="a" style="left:316px;top:568.50px;width:33px;height:9.90px;background:#1f1f1f"></div>
<div class="t" style="left:320px;top:569.95px;font-size:8.5px;color:#c8c8c8">Norr</div>
<svg class="ic" style="left:340px;top:572.15px" width="7" height="5" viewBox="0 0 7 5"><path d="M0.8 1 L3.5 4 L6.2 1" stroke="#c8c8c8" stroke-width="1" fill="none"/></svg>
<div class="a" style="left:353px;top:568.70px;width:10px;height:9.50px;background:#262626"></div>
<svg class="ic" style="left:366px;top:569.65px" width="9" height="9" viewBox="0 0 9 9"><path d="M4.5 4.5 m-1 0 a1 1 0 1 1 2 0 a2 2 0 1 1 -4 0 a3 3 0 1 1 6 0 a3.8 3.8 0 0 1 -6.5 2.5" stroke="#c8c8c8" stroke-width=".9" fill="none"/></svg>
<div class="a" style="left:378px;top:568.50px;width:32px;height:9.90px;background:#1f1f1f"></div>
<div class="t" style="left:383px;top:569.95px;font-size:8.5px;color:#c8c8c8">No &#923;</div>
<svg class="ic" style="left:401px;top:572.15px" width="7" height="5" viewBox="0 0 7 5"><path d="M0.8 1 L3.5 4 L6.2 1" stroke="#c8c8c8" stroke-width="1" fill="none"/></svg>
<div class="a" style="left:411px;top:568.20px;width:124px;height:10.50px;background:#353535"></div>
<div class="a" style="left:441px;top:568.70px;width:9px;height:9.50px;background:#2c2c2c"></div>
<div class="a" style="left:451px;top:568.70px;width:9px;height:9.50px;background:#2c2c2c"></div>
<div class="a" style="left:461px;top:568.70px;width:9px;height:9.50px;background:#2c2c2c"></div>
<div class="a" style="left:472px;top:568.70px;width:9px;height:9.50px;background:#2c2c2c"></div>
<div class="a" style="left:483px;top:568.70px;width:9px;height:9.50px;background:#2c2c2c"></div>
<div class="a" style="left:493px;top:568.70px;width:9px;height:9.50px;background:#2c2c2c"></div>
<div class="a" style="left:504px;top:568.70px;width:9px;height:9.50px;background:#2c2c2c"></div>
<div class="a" style="left:515px;top:568.70px;width:9px;height:9.50px;background:#2c2c2c"></div>
<svg class="ic" style="left:441px;top:569.65px" width="9" height="9" viewBox="0 0 9 9"><path d="M0.5 4.5 A4 4 0 0 1 8.5 4.5Z" fill="#d0d0d0"/><path d="M2 5 V8.5 M4.5 5 V8.5 M7 5 V8.5" stroke="#d0d0d0" stroke-width=".9"/></svg>
<svg class="ic" style="left:462px;top:570.15px" width="8" height="8" viewBox="0 0 8 8"><path d="M0.5 7.5 L7.5 0.5" stroke="#d0d0d0" stroke-width="1.1"/></svg>
<svg class="ic" style="left:540px;top:569.65px" width="9" height="9" viewBox="0 0 9 9"><path d="M4.5 4.5 m-1 0 a1 1 0 1 1 2 0 a2 2 0 1 1 -4 0 a3 3 0 1 1 6 0 a3.8 3.8 0 0 1 -6.5 2.5" stroke="#c8c8c8" stroke-width=".9" fill="none"/></svg>
<div class="a" style="left:553px;top:568.50px;width:64px;height:9.90px;background:#1f1f1f"></div>
<div class="t" style="left:558px;top:569.95px;font-size:8.5px;color:#c8c8c8">None</div>
<svg class="ic" style="left:607px;top:572.15px" width="7" height="5" viewBox="0 0 7 5"><path d="M0.8 1 L3.5 4 L6.2 1" stroke="#c8c8c8" stroke-width="1" fill="none"/></svg>
<div class="a" style="left:15px;top:580.20px;width:619px;height:11.50px;background:#2b2b2b"></div>
<div class="a" style="left:15px;top:591.70px;width:619px;height:1px;background:#1c1c1c"></div>
<div class="a" style="left:18px;top:581.20px;width:10px;height:9.50px;background:#242424"></div>
<div class="a" style="left:31px;top:581.20px;width:9px;height:9.50px;background:#242424"></div>
<div class="a" style="left:43px;top:581.20px;width:8px;height:9.50px;background:#242424"></div>
<div class="a" style="left:52px;top:581.20px;width:9px;height:9.50px;background:#242424"></div>
<svg class="ic" style="left:70px;top:583.15px" width="5" height="7" viewBox="0 0 5 7"><path d="M1 0.8 L4 3.5 L1 6.2" stroke="#9a9a9a" stroke-width="1" fill="none"/></svg>
<div class="a" style="left:79px;top:582.15px;width:7px;height:9px;background:#b8b8d8"></div>
<div class="t" style="left:93px;top:582.65px;font-size:8.5px;color:#c8c8c8">5</div>
<svg class="ic" style="left:116px;top:581.65px" width="8" height="10" viewBox="0 0 8 10"><rect x="0.4" y="0.4" width="7.2" height="9.2" rx="1.5" fill="#2a1206" stroke="#c8700f" stroke-width=".8"/><path d="M4 1.8 L6.5 6.5 H1.5Z" fill="#f29a1c"/><rect x="3.2" y="6.3" width="1.8" height="1.8" fill="#ddd"/></svg>
<div class="t" style="left:130px;top:582.15px;font-size:8.5px;color:#c4c4c4">enlarged monitor/magnifying-glass_two.ai</div>
<div class="a" style="left:316px;top:581.00px;width:33px;height:9.90px;background:#1f1f1f"></div>
<div class="t" style="left:320px;top:582.45px;font-size:8.5px;color:#c8c8c8">Norr</div>
<svg class="ic" style="left:340px;top:584.65px" width="7" height="5" viewBox="0 0 7 5"><path d="M0.8 1 L3.5 4 L6.2 1" stroke="#c8c8c8" stroke-width="1" fill="none"/></svg>
<div class="a" style="left:353px;top:581.20px;width:10px;height:9.50px;background:#262626"></div>
<svg class="ic" style="left:366px;top:582.15px" width="9" height="9" viewBox="0 0 9 9"><path d="M4.5 4.5 m-1 0 a1 1 0 1 1 2 0 a2 2 0 1 1 -4 0 a3 3 0 1 1 6 0 a3.8 3.8 0 0 1 -6.5 2.5" stroke="#c8c8c8" stroke-width=".9" fill="none"/></svg>
<div class="a" style="left:378px;top:581.00px;width:32px;height:9.90px;background:#1f1f1f"></div>
<div class="t" style="left:383px;top:582.45px;font-size:8.5px;color:#c8c8c8">No &#923;</div>
<svg class="ic" style="left:401px;top:584.65px" width="7" height="5" viewBox="0 0 7 5"><path d="M0.8 1 L3.5 4 L6.2 1" stroke="#c8c8c8" stroke-width="1" fill="none"/></svg>
<div class="a" style="left:411px;top:580.70px;width:124px;height:10.50px;background:#353535"></div>
<div class="a" style="left:441px;top:581.20px;width:9px;height:9.50px;background:#2c2c2c"></div>
<div class="a" style="left:451px;top:581.20px;width:9px;height:9.50px;background:#2c2c2c"></div>
<div class="a" style="left:461px;top:581.20px;width:9px;height:9.50px;background:#2c2c2c"></div>
<div class="a" style="left:472px;top:581.20px;width:9px;height:9.50px;background:#2c2c2c"></div>
<div class="a" style="left:483px;top:581.20px;width:9px;height:9.50px;background:#2c2c2c"></div>
<div class="a" style="left:493px;top:581.20px;width:9px;height:9.50px;background:#2c2c2c"></div>
<div class="a" style="left:504px;top:581.20px;width:9px;height:9.50px;background:#2c2c2c"></div>
<div class="a" style="left:515px;top:581.20px;width:9px;height:9.50px;background:#2c2c2c"></div>
<svg class="ic" style="left:441px;top:582.15px" width="9" height="9" viewBox="0 0 9 9"><path d="M0.5 4.5 A4 4 0 0 1 8.5 4.5Z" fill="#d0d0d0"/><path d="M2 5 V8.5 M4.5 5 V8.5 M7 5 V8.5" stroke="#d0d0d0" stroke-width=".9"/></svg>
<svg class="ic" style="left:462px;top:582.65px" width="8" height="8" viewBox="0 0 8 8"><path d="M0.5 7.5 L7.5 0.5" stroke="#d0d0d0" stroke-width="1.1"/></svg>
<svg class="ic" style="left:540px;top:582.15px" width="9" height="9" viewBox="0 0 9 9"><path d="M4.5 4.5 m-1 0 a1 1 0 1 1 2 0 a2 2 0 1 1 -4 0 a3 3 0 1 1 6 0 a3.8 3.8 0 0 1 -6.5 2.5" stroke="#c8c8c8" stroke-width=".9" fill="none"/></svg>
<div class="a" style="left:553px;top:581.00px;width:64px;height:9.90px;background:#1f1f1f"></div>
<div class="t" style="left:558px;top:582.45px;font-size:8.5px;color:#c8c8c8">None</div>
<svg class="ic" style="left:607px;top:584.65px" width="7" height="5" viewBox="0 0 7 5"><path d="M0.8 1 L3.5 4 L6.2 1" stroke="#c8c8c8" stroke-width="1" fill="none"/></svg>
<div class="a" style="left:15px;top:592.70px;width:619px;height:11.50px;background:#2b2b2b"></div>
<div class="a" style="left:15px;top:604.20px;width:619px;height:1px;background:#1c1c1c"></div>
<div class="a" style="left:18px;top:593.70px;width:10px;height:9.50px;background:#242424"></div>
<div class="a" style="left:31px;top:593.70px;width:9px;height:9.50px;background:#242424"></div>
<div class="a" style="left:43px;top:593.70px;width:8px;height:9.50px;background:#242424"></div>
<div class="a" style="left:52px;top:593.70px;width:9px;height:9.50px;background:#242424"></div>
<svg class="ic" style="left:70px;top:595.65px" width="5" height="7" viewBox="0 0 5 7"><path d="M1 0.8 L4 3.5 L1 6.2" stroke="#9a9a9a" stroke-width="1" fill="none"/></svg>
<div class="a" style="left:79px;top:594.65px;width:7px;height:9px;background:#c9b38a"></div>
<div class="t" style="left:93px;top:595.15px;font-size:8.5px;color:#c8c8c8">6</div>
<svg class="ic" style="left:114px;top:594.65px" width="11" height="9" viewBox="0 0 11 9"><rect x="0" y="0" width="11" height="9" fill="#c9c9c9"/><rect x="1.5" y="1.5" width="8" height="6" fill="#dadada" stroke="#7a7a7a" stroke-width=".6"/><circle cx="4.3" cy="3.8" r="1.4" fill="#2a6fe0"/><circle cx="6.5" cy="4.8" r="1.4" fill="#e03030"/><circle cx="4.6" cy="6" r="1.2" fill="#30b040"/></svg>
<div class="t" style="left:130px;top:594.65px;font-size:8.5px;color:#c4c4c4">magnifying-glass_two</div>
<div class="a" style="left:316px;top:593.50px;width:33px;height:9.90px;background:#1f1f1f"></div>
<div class="t" style="left:320px;top:594.95px;font-size:8.5px;color:#c8c8c8">Norr</div>
<svg class="ic" style="left:340px;top:597.15px" width="7" height="5" viewBox="0 0 7 5"><path d="M0.8 1 L3.5 4 L6.2 1" stroke="#c8c8c8" stroke-width="1" fill="none"/></svg>
<div class="a" style="left:353px;top:593.70px;width:10px;height:9.50px;background:#262626"></div>
<svg class="ic" style="left:366px;top:594.65px" width="9" height="9" viewBox="0 0 9 9"><path d="M4.5 4.5 m-1 0 a1 1 0 1 1 2 0 a2 2 0 1 1 -4 0 a3 3 0 1 1 6 0 a3.8 3.8 0 0 1 -6.5 2.5" stroke="#c8c8c8" stroke-width=".9" fill="none"/></svg>
<div class="a" style="left:378px;top:593.50px;width:32px;height:9.90px;background:#1f1f1f"></div>
<div class="t" style="left:383px;top:594.95px;font-size:8.5px;color:#c8c8c8">No &#923;</div>
<svg class="ic" style="left:401px;top:597.15px" width="7" height="5" viewBox="0 0 7 5"><path d="M0.8 1 L3.5 4 L6.2 1" stroke="#c8c8c8" stroke-width="1" fill="none"/></svg>
<div class="a" style="left:411px;top:593.20px;width:124px;height:10.50px;background:#353535"></div>
<div class="a" style="left:441px;top:593.70px;width:9px;height:9.50px;background:#2c2c2c"></div>
<div class="a" style="left:451px;top:593.70px;width:9px;height:9.50px;background:#2c2c2c"></div>
<div class="a" style="left:461px;top:593.70px;width:9px;height:9.50px;background:#2c2c2c"></div>
<div class="a" style="left:472px;top:593.70px;width:9px;height:9.50px;background:#2c2c2c"></div>
<div class="a" style="left:483px;top:593.70px;width:9px;height:9.50px;background:#2c2c2c"></div>
<div class="a" style="left:493px;top:593.70px;width:9px;height:9.50px;background:#2c2c2c"></div>
<div class="a" style="left:504px;top:593.70px;width:9px;height:9.50px;background:#2c2c2c"></div>
<div class="a" style="left:515px;top:593.70px;width:9px;height:9.50px;background:#2c2c2c"></div>
<svg class="ic" style="left:441px;top:594.65px" width="9" height="9" viewBox="0 0 9 9"><path d="M0.5 4.5 A4 4 0 0 1 8.5 4.5Z" fill="#d0d0d0"/><path d="M2 5 V8.5 M4.5 5 V8.5 M7 5 V8.5" stroke="#d0d0d0" stroke-width=".9"/></svg>
<svg class="ic" style="left:462px;top:595.15px" width="8" height="8" viewBox="0 0 8 8"><path d="M0.5 7.5 L7.5 0.5" stroke="#d0d0d0" stroke-width="1.1"/></svg>
<svg class="ic" style="left:540px;top:594.65px" width="9" height="9" viewBox="0 0 9 9"><path d="M4.5 4.5 m-1 0 a1 1 0 1 1 2 0 a2 2 0 1 1 -4 0 a3 3 0 1 1 6 0 a3.8 3.8 0 0 1 -6.5 2.5" stroke="#c8c8c8" stroke-width=".9" fill="none"/></svg>
<div class="a" style="left:553px;top:593.50px;width:64px;height:9.90px;background:#1f1f1f"></div>
<div class="t" style="left:558px;top:594.95px;font-size:8.5px;color:#c8c8c8">None</div>
<svg class="ic" style="left:607px;top:597.15px" width="7" height="5" viewBox="0 0 7 5"><path d="M0.8 1 L3.5 4 L6.2 1" stroke="#c8c8c8" stroke-width="1" fill="none"/></svg>
<div class="a" style="left:15px;top:605.20px;width:619px;height:11.50px;background:#2b2b2b"></div>
<div class="a" style="left:15px;top:616.70px;width:619px;height:1px;background:#1c1c1c"></div>
<div class="a" style="left:18px;top:606.20px;width:10px;height:9.50px;background:#242424"></div>
<div class="a" style="left:31px;top:606.20px;width:9px;height:9.50px;background:#242424"></div>
<div class="a" style="left:43px;top:606.20px;width:8px;height:9.50px;background:#242424"></div>
<div class="a" style="left:52px;top:606.20px;width:9px;height:9.50px;background:#242424"></div>
<svg class="ic" style="left:70px;top:608.15px" width="5" height="7" viewBox="0 0 5 7"><path d="M1 0.8 L4 3.5 L1 6.2" stroke="#9a9a9a" stroke-width="1" fill="none"/></svg>
<div class="a" style="left:79px;top:607.15px;width:7px;height:9px;background:#c9b38a"></div>
<div class="t" style="left:93px;top:607.65px;font-size:8.5px;color:#c8c8c8">7</div>
<svg class="ic" style="left:114px;top:607.15px" width="11" height="9" viewBox="0 0 11 9"><rect x="0" y="0" width="11" height="9" fill="#c9c9c9"/><rect x="1.5" y="1.5" width="8" height="6" fill="#dadada" stroke="#7a7a7a" stroke-width=".6"/><circle cx="4.3" cy="3.8" r="1.4" fill="#2a6fe0"/><circle cx="6.5" cy="4.8" r="1.4" fill="#e03030"/><circle cx="4.6" cy="6" r="1.2" fill="#30b040"/></svg>
<div class="t" style="left:130px;top:607.15px;font-size:8.5px;color:#c4c4c4">magnifying-glass</div>
<div class="a" style="left:316px;top:606.00px;width:33px;height:9.90px;background:#1f1f1f"></div>
<div class="t" style="left:320px;top:607.45px;font-size:8.5px;color:#c8c8c8">Norr</div>
<svg class="ic" style="left:340px;top:609.65px" width="7" height="5" viewBox="0 0 7 5"><path d="M0.8 1 L3.5 4 L6.2 1" stroke="#c8c8c8" stroke-width="1" fill="none"/></svg>
<div class="a" style="left:353px;top:606.20px;width:10px;height:9.50px;background:#262626"></div>
<svg class="ic" style="left:366px;top:607.15px" width="9" height="9" viewBox="0 0 9 9"><path d="M4.5 4.5 m-1 0 a1 1 0 1 1 2 0 a2 2 0 1 1 -4 0 a3 3 0 1 1 6 0 a3.8 3.8 0 0 1 -6.5 2.5" stroke="#c8c8c8" stroke-width=".9" fill="none"/></svg>
<div class="a" style="left:378px;top:606.00px;width:32px;height:9.90px;background:#1f1f1f"></div>
<div class="t" style="left:383px;top:607.45px;font-size:8.5px;color:#c8c8c8">No &#923;</div>
<svg class="ic" style="left:401px;top:609.65px" width="7" height="5" viewBox="0 0 7 5"><path d="M0.8 1 L3.5 4 L6.2 1" stroke="#c8c8c8" stroke-width="1" fill="none"/></svg>
<div class="a" style="left:411px;top:605.70px;width:124px;height:10.50px;background:#353535"></div>
<div class="a" style="left:441px;top:606.20px;width:9px;height:9.50px;background:#2c2c2c"></div>
<div class="a" style="left:451px;top:606.20px;width:9px;height:9.50px;background:#2c2c2c"></div>
<div class="a" style="left:461px;top:606.20px;width:9px;height:9.50px;background:#2c2c2c"></div>
<div class="a" style="left:472px;top:606.20px;width:9px;height:9.50px;background:#2c2c2c"></div>
<div class="a" style="left:483px;top:606.20px;width:9px;height:9.50px;background:#2c2c2c"></div>
<div class="a" style="left:493px;top:606.20px;width:9px;height:9.50px;background:#2c2c2c"></div>
<div class="a" style="left:504px;top:606.20px;width:9px;height:9.50px;background:#2c2c2c"></div>
<div class="a" style="left:515px;top:606.20px;width:9px;height:9.50px;background:#2c2c2c"></div>
<svg class="ic" style="left:441px;top:607.15px" width="9" height="9" viewBox="0 0 9 9"><path d="M0.5 4.5 A4 4 0 0 1 8.5 4.5Z" fill="#d0d0d0"/><path d="M2 5 V8.5 M4.5 5 V8.5 M7 5 V8.5" stroke="#d0d0d0" stroke-width=".9"/></svg>
<svg class="ic" style="left:462px;top:607.65px" width="8" height="8" viewBox="0 0 8 8"><path d="M0.5 7.5 L7.5 0.5" stroke="#d0d0d0" stroke-width="1.1"/></svg>
<svg class="ic" style="left:540px;top:607.15px" width="9" height="9" viewBox="0 0 9 9"><path d="M4.5 4.5 m-1 0 a1 1 0 1 1 2 0 a2 2 0 1 1 -4 0 a3 3 0 1 1 6 0 a3.8 3.8 0 0 1 -6.5 2.5" stroke="#c8c8c8" stroke-width=".9" fill="none"/></svg>
<div class="a" style="left:553px;top:606.00px;width:64px;height:9.90px;background:#1f1f1f"></div>
<div class="t" style="left:558px;top:607.45px;font-size:8.5px;color:#c8c8c8">None</div>
<svg class="ic" style="left:607px;top:609.65px" width="7" height="5" viewBox="0 0 7 5"><path d="M0.8 1 L3.5 4 L6.2 1" stroke="#c8c8c8" stroke-width="1" fill="none"/></svg>
<div class="a" style="left:15px;top:617.70px;width:619px;height:11.50px;background:#3a3a3a"></div>
<div class="a" style="left:15px;top:629.20px;width:619px;height:1px;background:#1c1c1c"></div>
<div class="a" style="left:18px;top:618.70px;width:10px;height:9.50px;background:#4a4a4a"></div>
<div class="a" style="left:31px;top:618.70px;width:9px;height:9.50px;background:#424242"></div>
<div class="a" style="left:43px;top:618.70px;width:8px;height:9.50px;background:#4a4a4a"></div>
<div class="a" style="left:52px;top:618.70px;width:9px;height:9.50px;background:#4a4a4a"></div>
<svg class="ic" style="left:19px;top:620.65px" width="10" height="7" viewBox="0 0 10 7"><path d="M0.5 3.5 Q5 -1.5 9.5 3.5 Q5 8.5 0.5 3.5Z" fill="#d8d8d8"/><circle cx="5" cy="3.5" r="1.6" fill="#232323"/></svg>
<svg class="ic" style="left:68px;top:622.15px" width="7" height="5" viewBox="0 0 7 5"><path d="M0.8 1 L3.5 4 L6.2 1" stroke="#9a9a9a" stroke-width="1" fill="none"/></svg>
<div class="a" style="left:79px;top:619.65px;width:7px;height:9px;background:#c9b38a"></div>
<div class="t" style="left:93px;top:620.15px;font-size:8.5px;color:#c8c8c8">8</div>
<svg class="ic" style="left:114px;top:619.65px" width="11" height="9" viewBox="0 0 11 9"><rect x="0" y="0" width="11" height="9" fill="#c9c9c9"/><rect x="1.5" y="1.5" width="8" height="6" fill="#dadada" stroke="#7a7a7a" stroke-width=".6"/><circle cx="4.3" cy="3.8" r="1.4" fill="#2a6fe0"/><circle cx="6.5" cy="4.8" r="1.4" fill="#e03030"/><circle cx="4.6" cy="6" r="1.2" fill="#30b040"/></svg>
<div class="a" style="left:127px;top:618.20px;width:186px;height:10.50px;background:#a4a4a4"></div>
<div class="t" style="left:130px;top:619.65px;font-size:8.5px;color:#252525">monitor-vm</div>
<div class="a" style="left:316px;top:618.50px;width:33px;height:9.90px;background:#1f1f1f"></div>
<div class="t" style="left:320px;top:619.95px;font-size:8.5px;color:#c8c8c8">Norr</div>
<svg class="ic" style="left:340px;top:622.15px" width="7" height="5" viewBox="0 0 7 5"><path d="M0.8 1 L3.5 4 L6.2 1" stroke="#c8c8c8" stroke-width="1" fill="none"/></svg>
<div class="a" style="left:353px;top:618.70px;width:10px;height:9.50px;background:#262626"></div>
<svg class="ic" style="left:366px;top:619.65px" width="9" height="9" viewBox="0 0 9 9"><path d="M4.5 4.5 m-1 0 a1 1 0 1 1 2 0 a2 2 0 1 1 -4 0 a3 3 0 1 1 6 0 a3.8 3.8 0 0 1 -6.5 2.5" stroke="#c8c8c8" stroke-width=".9" fill="none"/></svg>
<div class="a" style="left:378px;top:618.50px;width:32px;height:9.90px;background:#1f1f1f"></div>
<div class="t" style="left:383px;top:619.95px;font-size:8.5px;color:#c8c8c8">No &#923;</div>
<svg class="ic" style="left:401px;top:622.15px" width="7" height="5" viewBox="0 0 7 5"><path d="M0.8 1 L3.5 4 L6.2 1" stroke="#c8c8c8" stroke-width="1" fill="none"/></svg>
<div class="a" style="left:411px;top:618.20px;width:124px;height:10.50px;background:#444"></div>
<div class="a" style="left:441px;top:618.70px;width:9px;height:9.50px;background:#3c3c3c"></div>
<div class="a" style="left:451px;top:618.70px;width:9px;height:9.50px;background:#3c3c3c"></div>
<div class="a" style="left:461px;top:618.70px;width:9px;height:9.50px;background:#3c3c3c"></div>
<div class="a" style="left:472px;top:618.70px;width:9px;height:9.50px;background:#3c3c3c"></div>
<div class="a" style="left:483px;top:618.70px;width:9px;height:9.50px;background:#3c3c3c"></div>
<div class="a" style="left:493px;top:618.70px;width:9px;height:9.50px;background:#3c3c3c"></div>
<div class="a" style="left:504px;top:618.70px;width:9px;height:9.50px;background:#3c3c3c"></div>
<div class="a" style="left:515px;top:618.70px;width:9px;height:9.50px;background:#3c3c3c"></div>
<svg class="ic" style="left:441px;top:619.65px" width="9" height="9" viewBox="0 0 9 9"><path d="M0.5 4.5 A4 4 0 0 1 8.5 4.5Z" fill="#d0d0d0"/><path d="M2 5 V8.5 M4.5 5 V8.5 M7 5 V8.5" stroke="#d0d0d0" stroke-width=".9"/></svg>
<svg class="ic" style="left:452px;top:620.15px" width="8" height="8" viewBox="0 0 8 8"><circle cx="4" cy="4" r="1.8" fill="#d0d0d0"/><path d="M4 0 V8 M0 4 H8" stroke="#d0d0d0" stroke-width=".9"/></svg>
<svg class="ic" style="left:462px;top:620.15px" width="8" height="8" viewBox="0 0 8 8"><path d="M0.5 7.5 L7.5 0.5" stroke="#d0d0d0" stroke-width="1.1"/></svg>
<svg class="ic" style="left:540px;top:619.65px" width="9" height="9" viewBox="0 0 9 9"><path d="M4.5 4.5 m-1 0 a1 1 0 1 1 2 0 a2 2 0 1 1 -4 0 a3 3 0 1 1 6 0 a3.8 3.8 0 0 1 -6.5 2.5" stroke="#c8c8c8" stroke-width=".9" fill="none"/></svg>
<div class="a" style="left:553px;top:618.50px;width:64px;height:9.90px;background:#1f1f1f"></div>
<div class="t" style="left:558px;top:619.95px;font-size:8.5px;color:#c8c8c8">None</div>
<svg class="ic" style="left:607px;top:622.15px" width="7" height="5" viewBox="0 0 7 5"><path d="M0.8 1 L3.5 4 L6.2 1" stroke="#c8c8c8" stroke-width="1" fill="none"/></svg>
<div class="a" style="left:15px;top:543.5px;width:619px;height:13.5px;background:#232323;border-top:1px solid #1b1b1b;border-bottom:1px solid #161616"></div>
<svg class="ic" style="left:19px;top:546px" width="10" height="7" viewBox="0 0 10 7"><path d="M0.5 3.5 Q5 -1.5 9.5 3.5 Q5 8.5 0.5 3.5Z" fill="#d8d8d8"/><circle cx="5" cy="3.5" r="1.6" fill="#232323"/></svg>
<svg class="ic" style="left:30px;top:545px" width="9" height="9" viewBox="0 0 9 9"><path d="M0.5 3 H3 L6 0.5 V8.5 L3 6 H0.5Z" fill="#d0d0d0"/><path d="M7.3 2.5 Q8.5 4.5 7.3 6.5" stroke="#d0d0d0" stroke-width=".9" fill="none"/></svg>
<div class="a" style="left:43px;top:547.5px;width:5px;height:5px;border-radius:50%;background:#d0d0d0"></div>
<svg class="ic" style="left:52px;top:545px" width="8" height="9" viewBox="0 0 8 9"><path d="M2 4 V2.5 A2 2 0 0 1 6 2.5 V4" stroke="#d8d8d8" stroke-width="1.2" fill="none"/><rect x="1" y="4" width="6" height="5" fill="#d8d8d8"/></svg>
<div class="a" style="left:65px;top:546px;width:1px;height:9px;background:#383838"></div>
<svg class="ic" style="left:75px;top:545px" width="10" height="10" viewBox="0 0 10 10"><path d="M0.5 0.5 H5 L9.5 5 L5 9.5 L0.5 5Z" fill="#d0d0d0"/><circle cx="2.8" cy="2.8" r=".9" fill="#232323"/></svg>
<div class="a" style="left:89px;top:546px;width:1px;height:9px;background:#383838"></div>
<div class="t" style="left:93px;top:547px;font-size:7px;color:#9a9a9a">#</div>
<div class="a" style="left:113px;top:546px;width:1px;height:9px;background:#383838"></div>
<div class="t n8" style="left:117px;top:546.5px;font-size:7.8px;color:#9a9a9a">Source Name</div>
<div class="a" style="left:314px;top:546px;width:1px;height:9px;background:#383838"></div>
<div class="t n8" style="left:318px;top:546.5px;font-size:7.8px;color:#9a9a9a">Mode</div>
<div class="t" style="left:354px;top:546.5px;font-size:7.8px;color:#9a9a9a">T</div>
<div class="t n8" style="left:368px;top:546.5px;font-size:7.8px;color:#9a9a9a">Track Matte</div>
<svg class="ic" style="left:413px;top:546px" width="22" height="9" viewBox="0 0 22 9"><rect x="0" y="0" width="8" height="8" fill="#d0d0d0"/><circle cx="4" cy="4" r="2.3" fill="#232323"/><rect x="13" y="0" width="8" height="8" fill="#d0d0d0"/><path d="M14 7 Q15 2 20 1" stroke="#232323" stroke-width="1.2" fill="none"/></svg>
<svg class="ic" style="left:440px;top:545px" width="86" height="10" viewBox="0 0 86 10"><path d="M1 5 A4 4 0 0 1 9 5Z M1 6 H9" fill="#d0d0d0" stroke="#d0d0d0" stroke-width=".8"/><path d="M2.5 6 V9 M5 6 V9 M7.5 6 V9" stroke="#d0d0d0" stroke-width=".9"/><circle cx="15" cy="5" r="2" fill="#d0d0d0"/><path d="M15 0.5 V9.5 M10.5 5 H19.5" stroke="#d0d0d0" stroke-width=".9"/><path d="M22 1 L29 9" stroke="#d0d0d0" stroke-width="1.1"/><text x="31" y="8.5" font-family="Liberation Serif" font-style="italic" font-size="10" fill="#d0d0d0">fx</text><rect x="42" y="1" width="9" height="8" fill="#d0d0d0"/><rect x="43.5" y="3" width="6" height="3" fill="#777"/><rect x="53" y="2" width="10" height="6" rx="3" transform="rotate(-35 58 5)" fill="#d0d0d0"/><circle cx="69" cy="5" r="4" fill="#d0d0d0"/><path d="M69 1 A4 4 0 0 0 69 9Z" fill="#555"/><path d="M77 3 L80.5 1 L84 3 V7 L80.5 9 L77 7Z M77 3 L80.5 5 L84 3 M80.5 5 V9" stroke="#d0d0d0" stroke-width=".9" fill="none"/></svg>
<div class="a" style="left:533px;top:546px;width:1px;height:9px;background:#383838"></div>
<div class="t n8" style="left:539px;top:546.5px;font-size:7.8px;color:#9a9a9a">Parent &amp; Link</div>
<div class="a" style="left:622px;top:546px;width:1px;height:9px;background:#383838"></div>
<div class="a" style="left:15px;top:641.70px;width:619px;height:1px;background:#1b1b1b"></div>
<svg class="ic" style="left:82px;top:634.65px" width="7" height="5" viewBox="0 0 7 5"><path d="M0.8 1 L3.5 4 L6.2 1" stroke="#9a9a9a" stroke-width="1" fill="none"/></svg>
<div class="t" style="left:95px;top:632.15px;font-size:8.5px;color:#b8b8b8">Masks</div>
<div class="a" style="left:15px;top:654.20px;width:619px;height:1px;background:#1b1b1b"></div>
<div class="a" style="left:52px;top:643.70px;width:9px;height:9.50px;background:#1c1c1c"></div>
<svg class="ic" style="left:95px;top:647.15px" width="7" height="5" viewBox="0 0 7 5"><path d="M0.8 1 L3.5 4 L6.2 1" stroke="#9a9a9a" stroke-width="1" fill="none"/></svg>
<div class="a" style="left:106px;top:645.65px;width:7px;height:7px;background:#1f5a2a"></div>
<div class="t" style="left:119px;top:644.65px;font-size:8.5px;color:#b8b8b8">Mask 1</div>
<div class="a" style="left:15px;top:666.70px;width:619px;height:1px;background:#1b1b1b"></div>
<svg class="ic" style="left:21px;top:658.65px" width="30" height="7" viewBox="0 0 30 7"><path d="M4 0.5 V6.5 L0.5 3.5Z M23 0.5 V6.5 L26.5 3.5Z" fill="#c8c8c8"/><path d="M13.5 0.8 L16.2 3.5 L13.5 6.2 L10.8 3.5Z" fill="none" stroke="#c8c8c8" stroke-width=".9"/></svg>
<svg class="ic" style="left:116px;top:656.65px" width="10" height="10" viewBox="0 0 10 10"><circle cx="5" cy="5.5" r="3.8" fill="none" stroke="#2d8ceb" stroke-width="1.2"/><path d="M3.5 0.5 H6.5 M5 5.5 L7 3" stroke="#2d8ceb" stroke-width="1.1"/></svg>
<svg class="ic" style="left:129px;top:657.65px" width="9" height="8" viewBox="0 0 9 8"><path d="M0.5 0 V7.5 H9 M1.5 3 L4 6 L6 3.5 L8 5" stroke="#c8c8c8" stroke-width=".9" fill="none"/></svg>
<div class="t" style="left:145px;top:657.15px;font-size:8.5px;color:#b8b8b8">Mask Path</div>
<div class="a" style="left:15px;top:679.20px;width:619px;height:1px;background:#1b1b1b"></div>
<svg class="ic" style="left:116px;top:669.15px" width="10" height="10" viewBox="0 0 10 10"><circle cx="5" cy="5.5" r="3.8" fill="none" stroke="#c8c8c8" stroke-width="1.2"/><path d="M3.5 0.5 H6.5" stroke="#c8c8c8" stroke-width="1.1"/></svg>
<div class="t" style="left:131px;top:669.65px;font-size:8.5px;color:#b8b8b8">Mask Feather</div>
<div class="a" style="left:15px;top:691.70px;width:619px;height:1px;background:#1b1b1b"></div>
<svg class="ic" style="left:116px;top:681.65px" width="10" height="10" viewBox="0 0 10 10"><circle cx="5" cy="5.5" r="3.8" fill="none" stroke="#c8c8c8" stroke-width="1.2"/><path d="M3.5 0.5 H6.5" stroke="#c8c8c8" stroke-width="1.1"/></svg>
<div class="t" style="left:131px;top:682.15px;font-size:8.5px;color:#b8b8b8">Mask Opacity</div>
<div class="a" style="left:15px;top:704.20px;width:619px;height:1px;background:#1b1b1b"></div>
<svg class="ic" style="left:21px;top:696.15px" width="30" height="7" viewBox="0 0 30 7"><path d="M4 0.5 V6.5 L0.5 3.5Z M23 0.5 V6.5 L26.5 3.5Z" fill="#c8c8c8"/><path d="M13.5 0.8 L16.2 3.5 L13.5 6.2 L10.8 3.5Z" fill="none" stroke="#c8c8c8" stroke-width=".9"/></svg>
<svg class="ic" style="left:116px;top:694.15px" width="10" height="10" viewBox="0 0 10 10"><circle cx="5" cy="5.5" r="3.8" fill="none" stroke="#2d8ceb" stroke-width="1.2"/><path d="M3.5 0.5 H6.5 M5 5.5 L7 3" stroke="#2d8ceb" stroke-width="1.1"/></svg>
<svg class="ic" style="left:129px;top:695.15px" width="9" height="8" viewBox="0 0 9 8"><path d="M0.5 0 V7.5 H9 M1.5 3 L4 6 L6 3.5 L8 5" stroke="#c8c8c8" stroke-width=".9" fill="none"/></svg>
<div class="t" style="left:145px;top:694.65px;font-size:8.5px;color:#b8b8b8">Mask Expansion</div>
<div class="a" style="left:438.5px;top:643.50px;width:46px;height:10.5px;background:#1e1e1e"></div>
<div class="t" style="left:444px;top:645.00px;font-size:8.5px;color:#c8c8c8">Add</div>
<svg class="ic" style="left:475px;top:647.50px" width="7" height="5" viewBox="0 0 7 5"><path d="M0.8 1 L3.5 4 L6.2 1" stroke="#c8c8c8" stroke-width="1" fill="none"/></svg>
<div class="a" style="left:489px;top:643.70px;width:9px;height:10px;background:#1e1e1e"></div>
<div class="t" style="left:501px;top:645.00px;font-size:8.5px;color:#b8b8b8">Inverted</div>
<div class="t" style="left:440px;top:657.20px;font-size:8.5px;color:#a8a8a8"><span style="color:#3a8fe5">Shape...</span></div>
<svg class="ic" style="left:549px;top:657.20px" width="9" height="9" viewBox="0 0 9 9"><path d="M4.5 4.5 m-1 0 a1 1 0 1 1 2 0 a2 2 0 1 1 -4 0 a3 3 0 1 1 6 0 a3.8 3.8 0 0 1 -6.5 2.5" stroke="#c8c8c8" stroke-width=".9" fill="none"/></svg>
<div class="t" style="left:452px;top:669.70px;font-size:8.5px;color:#a8a8a8"><span style="color:#3a8fe5">0.0,0.0</span> &nbsp;pixels</div>
<svg class="ic" style="left:549px;top:669.70px" width="9" height="9" viewBox="0 0 9 9"><path d="M4.5 4.5 m-1 0 a1 1 0 1 1 2 0 a2 2 0 1 1 -4 0 a3 3 0 1 1 6 0 a3.8 3.8 0 0 1 -6.5 2.5" stroke="#c8c8c8" stroke-width=".9" fill="none"/></svg>
<div class="t" style="left:439px;top:682.20px;font-size:8.5px;color:#a8a8a8"><span style="color:#3a8fe5">100</span> %</div>
<svg class="ic" style="left:549px;top:682.20px" width="9" height="9" viewBox="0 0 9 9"><path d="M4.5 4.5 m-1 0 a1 1 0 1 1 2 0 a2 2 0 1 1 -4 0 a3 3 0 1 1 6 0 a3.8 3.8 0 0 1 -6.5 2.5" stroke="#c8c8c8" stroke-width=".9" fill="none"/></svg>
<div class="t" style="left:439px;top:694.70px;font-size:8.5px;color:#a8a8a8"><span style="color:#3a8fe5">7.0</span> &nbsp;pixels</div>
<svg class="ic" style="left:549px;top:694.70px" width="9" height="9" viewBox="0 0 9 9"><path d="M4.5 4.5 m-1 0 a1 1 0 1 1 2 0 a2 2 0 1 1 -4 0 a3 3 0 1 1 6 0 a3.8 3.8 0 0 1 -6.5 2.5" stroke="#c8c8c8" stroke-width=".9" fill="none"/></svg>
<svg class="ic" style="left:438px;top:671.20px" width="10" height="6" viewBox="0 0 10 6"><rect x="0.6" y="0.6" width="5" height="4.8" rx="2.4" fill="none" stroke="#d0d0d0" stroke-width="1"/><rect x="4.4" y="0.6" width="5" height="4.8" rx="2.4" fill="none" stroke="#d0d0d0" stroke-width="1"/></svg>
<div class="a" style="left:15px;top:705px;width:619px;height:13.5px;background:#232323;border-top:1px solid #161616"></div>
<svg class="ic" style="left:20px;top:707px" width="60" height="10" viewBox="0 0 60 10"><path d="M1 2 H7 V6 H1Z M3 4 H9 V8 H3Z" fill="none" stroke="#2d8ceb" stroke-width="1.1"/><circle cx="17" cy="4" r="3" fill="none" stroke="#2d8ceb" stroke-width="1.1"/><rect x="17" y="4.5" width="5" height="4" fill="none" stroke="#2d8ceb" stroke-width="1.1"/><path d="M31 1 V9 M28 2 L31 4 L34 2 M28 8 L31 6 L34 8" stroke="#bdbdbd" stroke-width="1.1" fill="none"/><circle cx="44" cy="5" r="2.5" fill="#bdbdbd"/><path d="M40 9 Q44 5 48 9Z M47 3 L50 3" stroke="#bdbdbd" stroke-width="1"/></svg>
<div class="t" style="left:93px;top:708px;font-size:8.5px;color:#b8b8b8">Frame Render Time: &nbsp;<span style="color:#3fc9a0">15ms</span></div>
<!-- TIMELINE RIGHT -->
<div class="a" style="left:633px;top:557px;width:1.5px;height:148px;background:#111"></div>
<div class="a" style="left:639px;top:522.5px;width:608px;height:5px;background:#6a6a6a;border-radius:1px"></div>
<div class="a" style="left:634px;top:521.5px;width:5px;height:7px;background:#2d8ceb;border-radius:3px 0 0 3px"></div>
<div class="a" style="left:1245px;top:521.5px;width:5px;height:7px;background:#2d8ceb;border-radius:0 3px 3px 0"></div>
<svg class="ic" style="left:634px;top:528px" width="620" height="30" viewBox="0 0 620 30"><text x="4.00" y="8" font-family="Liberation Sans" font-size="8" fill="#bdbdbd">:00s</text><path d="M5.00 11 V14" stroke="#bdbdbd" stroke-width="1"/><text x="59.72" y="8" font-family="Liberation Sans" font-size="8" fill="#bdbdbd">01s</text><path d="M65.72 11 V14" stroke="#bdbdbd" stroke-width="1"/><text x="120.44" y="8" font-family="Liberation Sans" font-size="8" fill="#bdbdbd">02s</text><path d="M126.44 11 V14" stroke="#bdbdbd" stroke-width="1"/><text x="181.16" y="8" font-family="Liberation Sans" font-size="8" fill="#bdbdbd">03s</text><path d="M187.16 11 V14" stroke="#bdbdbd" stroke-width="1"/><text x="241.88" y="8" font-family="Liberation Sans" font-size="8" fill="#bdbdbd">04s</text><path d="M247.88 11 V14" stroke="#bdbdbd" stroke-width="1"/><text x="302.60" y="8" font-family="Liberation Sans" font-size="8" fill="#bdbdbd">05s</text><path d="M308.60 11 V14" stroke="#bdbdbd" stroke-width="1"/><text x="363.32" y="8" font-family="Liberation Sans" font-size="8" fill="#bdbdbd">06s</text><path d="M369.32 11 V14" stroke="#bdbdbd" stroke-width="1"/><text x="424.04" y="8" font-family="Liberation Sans" font-size="8" fill="#bdbdbd">07s</text><path d="M430.04 11 V14" stroke="#bdbdbd" stroke-width="1"/><text x="484.76" y="8" font-family="Liberation Sans" font-size="8" fill="#bdbdbd">08s</text><path d="M490.76 11 V14" stroke="#bdbdbd" stroke-width="1"/><text x="545.48" y="8" font-family="Liberation Sans" font-size="8" fill="#bdbdbd">09s</text><path d="M551.48 11 V14" stroke="#bdbdbd" stroke-width="1"/><text x="603.20" y="8" font-family="Liberation Sans" font-size="8" fill="#bdbdbd">10s</text><path d="M612.20 11 V14" stroke="#bdbdbd" stroke-width="1"/></svg>
<div class="a" style="left:639px;top:543px;width:608px;height:10.8px;background:#6b6b6b"></div>
<div class="a" style="left:634.5px;top:543px;width:4.5px;height:10.8px;background:#2d8ceb;border-radius:3px 0 0 3px"></div>
<div class="a" style="left:1245px;top:543px;width:4.5px;height:10.8px;background:#2d8ceb;border-radius:0 3px 3px 0"></div>
<div class="a" style="left:639px;top:554.8px;width:608px;height:2.4px;background:#1fd21f"></div>
<div class="a" style="left:687.5px;top:554.8px;width:2px;height:2.4px;background:#1a3ad0"></div>
<svg class="ic" style="left:1254px;top:544px" width="9" height="12" viewBox="0 0 9 12"><path d="M0.5 0.5 H8.5 V8 L4.5 11.5 L0.5 8Z" fill="#c8c8c8"/></svg>
<div class="a" style="left:634.5px;top:557.20px;width:618px;height:9.50px;background:#303030"></div>
<div class="a" style="left:634.5px;top:566.70px;width:618px;height:1px;background:#222"></div>
<div class="a" style="left:634.5px;top:567.70px;width:618px;height:11.50px;background:#303030"></div>
<div class="a" style="left:634.5px;top:579.20px;width:618px;height:1px;background:#222"></div>
<div class="a" style="left:634.5px;top:580.20px;width:618px;height:11.50px;background:#303030"></div>
<div class="a" style="left:634.5px;top:591.70px;width:618px;height:1px;background:#222"></div>
<div class="a" style="left:634.5px;top:592.70px;width:618px;height:11.50px;background:#303030"></div>
<div class="a" style="left:634.5px;top:604.20px;width:618px;height:1px;background:#222"></div>
<div class="a" style="left:634.5px;top:605.20px;width:618px;height:11.50px;background:#303030"></div>
<div class="a" style="left:634.5px;top:616.70px;width:618px;height:1px;background:#222"></div>
<div class="a" style="left:634.5px;top:617.70px;width:618px;height:11.50px;background:#303030"></div>
<div class="a" style="left:634.5px;top:629.20px;width:618px;height:1px;background:#222"></div>
<div class="a" style="left:634.5px;top:630.20px;width:612px;height:11.50px;background:#303030"></div>
<div class="a" style="left:634.5px;top:641.70px;width:618px;height:1px;background:#222"></div>
<div class="a" style="left:634.5px;top:642.70px;width:612px;height:11.50px;background:#303030"></div>
<div class="a" style="left:634.5px;top:654.20px;width:618px;height:1px;background:#222"></div>
<div class="a" style="left:634.5px;top:655.20px;width:612px;height:11.50px;background:#303030"></div>
<div class="a" style="left:634.5px;top:666.70px;width:618px;height:1px;background:#222"></div>
<div class="a" style="left:634.5px;top:667.70px;width:612px;height:11.50px;background:#303030"></div>
<div class="a" style="left:634.5px;top:679.20px;width:618px;height:1px;background:#222"></div>
<div class="a" style="left:634.5px;top:680.20px;width:612px;height:11.50px;background:#303030"></div>
<div class="a" style="left:634.5px;top:691.70px;width:618px;height:1px;background:#222"></div>
<div class="a" style="left:634.5px;top:692.70px;width:612px;height:11.50px;background:#303030"></div>
<div class="a" style="left:634.5px;top:704.20px;width:618px;height:1px;background:#222"></div>
<div class="a" style="left:1013px;top:557.20px;width:238px;height:9.20px;background:#8c3b37"></div>
<div class="a" style="left:639px;top:568.00px;width:612px;height:10.90px;background:#6f6d85"></div>
<div class="a" style="left:760px;top:580.50px;width:491px;height:10.90px;background:#6f6d85"></div>
<div class="a" style="left:740px;top:593.00px;width:511px;height:10.90px;background:#6d6350"></div>
<div class="a" style="left:740px;top:605.50px;width:511px;height:10.90px;background:#6d6350"></div>
<div class="a" style="left:634.5px;top:618.00px;width:616.5px;height:10.90px;background:#9b8c70"></div>
<div class="a" style="left:1246px;top:618.00px;width:5px;height:10.90px;background:#6b6b6b"></div>
<div class="a" style="left:639px;top:557.2px;width:374px;height:9.50px;background:#383838"></div>
<svg class="ic" style="left:1252px;top:556.20px" width="11" height="9" viewBox="0 0 11 9"><path d="M1 4.5 L5 0.5 H10.5 V8.5 H5Z" fill="#d0d0d0"/><circle cx="4" cy="4.5" r="1.5" fill="#232323"/></svg>
<svg class="ic" style="left:634.5px;top:618.00px;overflow:hidden" width="611.5" height="10.90"><filter id="nz" x="0" y="0" width="100%" height="100%"><feTurbulence type="fractalNoise" baseFrequency="1.1" numOctaves="1" seed="3"/><feColorMatrix values="0 0 0 0 0.85  0 0 0 0 0.8  0 0 0 0 0.68  0 0 0 1.6 -0.75"/></filter><rect width="611.5" height="10.90" filter="url(#nz)" opacity="0.35"/></svg>
<svg class="ic" style="left:635.5px;top:657.30px" width="8" height="9" viewBox="0 0 8 9"><path d="M0.5 0.5 H7.5 L4.8 4.5 L7.5 8.5 H0.5 L3.2 4.5Z" fill="#d8d8d8"/></svg>
<svg class="ic" style="left:757px;top:657.30px" width="8" height="9" viewBox="0 0 8 9"><path d="M0.5 0.5 H7.5 L4.8 4.5 L7.5 8.5 H0.5 L3.2 4.5Z" fill="#d8d8d8"/></svg>
<svg class="ic" style="left:797px;top:657.30px" width="8" height="9" viewBox="0 0 8 9"><path d="M0.5 0.5 H7.5 L4.8 4.5 L7.5 8.5 H0.5 L3.2 4.5Z" fill="#d8d8d8"/></svg>
<svg class="ic" style="left:878px;top:657.30px" width="8" height="9" viewBox="0 0 8 9"><path d="M0.5 0.5 H7.5 L4.8 4.5 L7.5 8.5 H0.5 L3.2 4.5Z" fill="#d8d8d8"/></svg>
<svg class="ic" style="left:898.5px;top:657.30px" width="8" height="9" viewBox="0 0 8 9"><path d="M0.5 0.5 H7.5 L4.8 4.5 L7.5 8.5 H0.5 L3.2 4.5Z" fill="#d8d8d8"/></svg>
<svg class="ic" style="left:908.5px;top:657.30px" width="8" height="9" viewBox="0 0 8 9"><path d="M0.5 0.5 H7.5 L4.8 4.5 L7.5 8.5 H0.5 L3.2 4.5Z" fill="#d8d8d8"/></svg>
<svg class="ic" style="left:918.5px;top:657.30px" width="8" height="9" viewBox="0 0 8 9"><path d="M0.5 0.5 H7.5 L4.8 4.5 L7.5 8.5 H0.5 L3.2 4.5Z" fill="#9a9a9a"/></svg>
<svg class="ic" style="left:757px;top:695.30px" width="8" height="8" viewBox="0 0 8 8"><path d="M4 0.3 L7.7 4 L4 7.7 L0.3 4Z" fill="#d8d8d8"/><circle cx="4" cy="4" r=".7" fill="#9a9a9a"/></svg>
<svg class="ic" style="left:777px;top:695.30px" width="8" height="8" viewBox="0 0 8 8"><path d="M4 0.3 L7.7 4 L4 7.7 L0.3 4Z" fill="#d8d8d8"/><circle cx="4" cy="4" r=".7" fill="#9a9a9a"/></svg>
<svg class="ic" style="left:797px;top:695.30px" width="8" height="8" viewBox="0 0 8 8"><path d="M4 0.3 L7.7 4 L4 7.7 L0.3 4Z" fill="#d8d8d8"/><circle cx="4" cy="4" r=".7" fill="#9a9a9a"/></svg>
<div class="a" style="left:859.5px;top:535px;width:1.2px;height:170px;background:#3b8fe0"></div>
<svg class="ic" style="left:854px;top:531px" width="12" height="13" viewBox="0 0 12 13"><path d="M1 1 H11 V7 L6 12 L1 7Z" fill="#3b8fe0"/><path d="M3.5 4 L6 7 L8.5 4" stroke="#1a3a70" stroke-width="1" fill="none"/></svg>
<svg class="ic" style="left:857.6px;top:631.90px" width="5" height="9" viewBox="0 0 5 9"><path d="M0.3 0.6 H4.7 M0.3 8.4 H4.7 M2.5 0.6 V8.4" stroke="#c8d4e0" stroke-width="1.2"/></svg>
<svg class="ic" style="left:857.6px;top:644.40px" width="5" height="9" viewBox="0 0 5 9"><path d="M0.3 0.6 H4.7 M0.3 8.4 H4.7 M2.5 0.6 V8.4" stroke="#c8d4e0" stroke-width="1.2"/></svg>
<svg class="ic" style="left:857.6px;top:669.40px" width="5" height="9" viewBox="0 0 5 9"><path d="M0.3 0.6 H4.7 M0.3 8.4 H4.7 M2.5 0.6 V8.4" stroke="#c8d4e0" stroke-width="1.2"/></svg>
<svg class="ic" style="left:857.6px;top:681.90px" width="5" height="9" viewBox="0 0 5 9"><path d="M0.3 0.6 H4.7 M0.3 8.4 H4.7 M2.5 0.6 V8.4" stroke="#c8d4e0" stroke-width="1.2"/></svg>
<svg class="ic" style="left:858.5px;top:657.30px" width="8" height="9" viewBox="0 0 8 9"><path d="M0.5 0.5 H7.5 L4.8 4.5 L7.5 8.5 H0.5 L3.2 4.5Z" fill="#d8d8d8"/></svg>
<svg class="ic" style="left:858px;top:695.30px" width="8" height="8" viewBox="0 0 8 8"><path d="M4 0.5 L7.5 4 L4 7.5 L0.5 4Z" fill="#9a9a9a"/></svg>
<div class="a" style="left:1252.5px;top:558px;width:11px;height:147px;background:#262626"></div>
<div class="a" style="left:1253.5px;top:587px;width:9.5px;height:88px;background:#363636;border-radius:5px"></div>
<div class="a" style="left:634.5px;top:705px;width:630px;height:13.5px;background:#232323;border-top:1px solid #161616"></div>
<div class="a" style="left:634.5px;top:705px;width:78px;height:13.5px;background:#1c1c1c"></div>
<svg class="ic" style="left:638px;top:708px" width="75" height="9" viewBox="0 0 75 9"><path d="M2 6 L4 3.5 L6 6Z" fill="#c8c8c8"/><circle cx="18.5" cy="5" r="2.8" fill="none" stroke="#c8c8c8" stroke-width="1.1"/><path d="M21.5 5 H50" stroke="#4a4a4a" stroke-width="1"/><path d="M59 7 L63 2 L66 5 L68 2.5 L72 7Z" fill="#c8c8c8"/></svg>
</body></html>
